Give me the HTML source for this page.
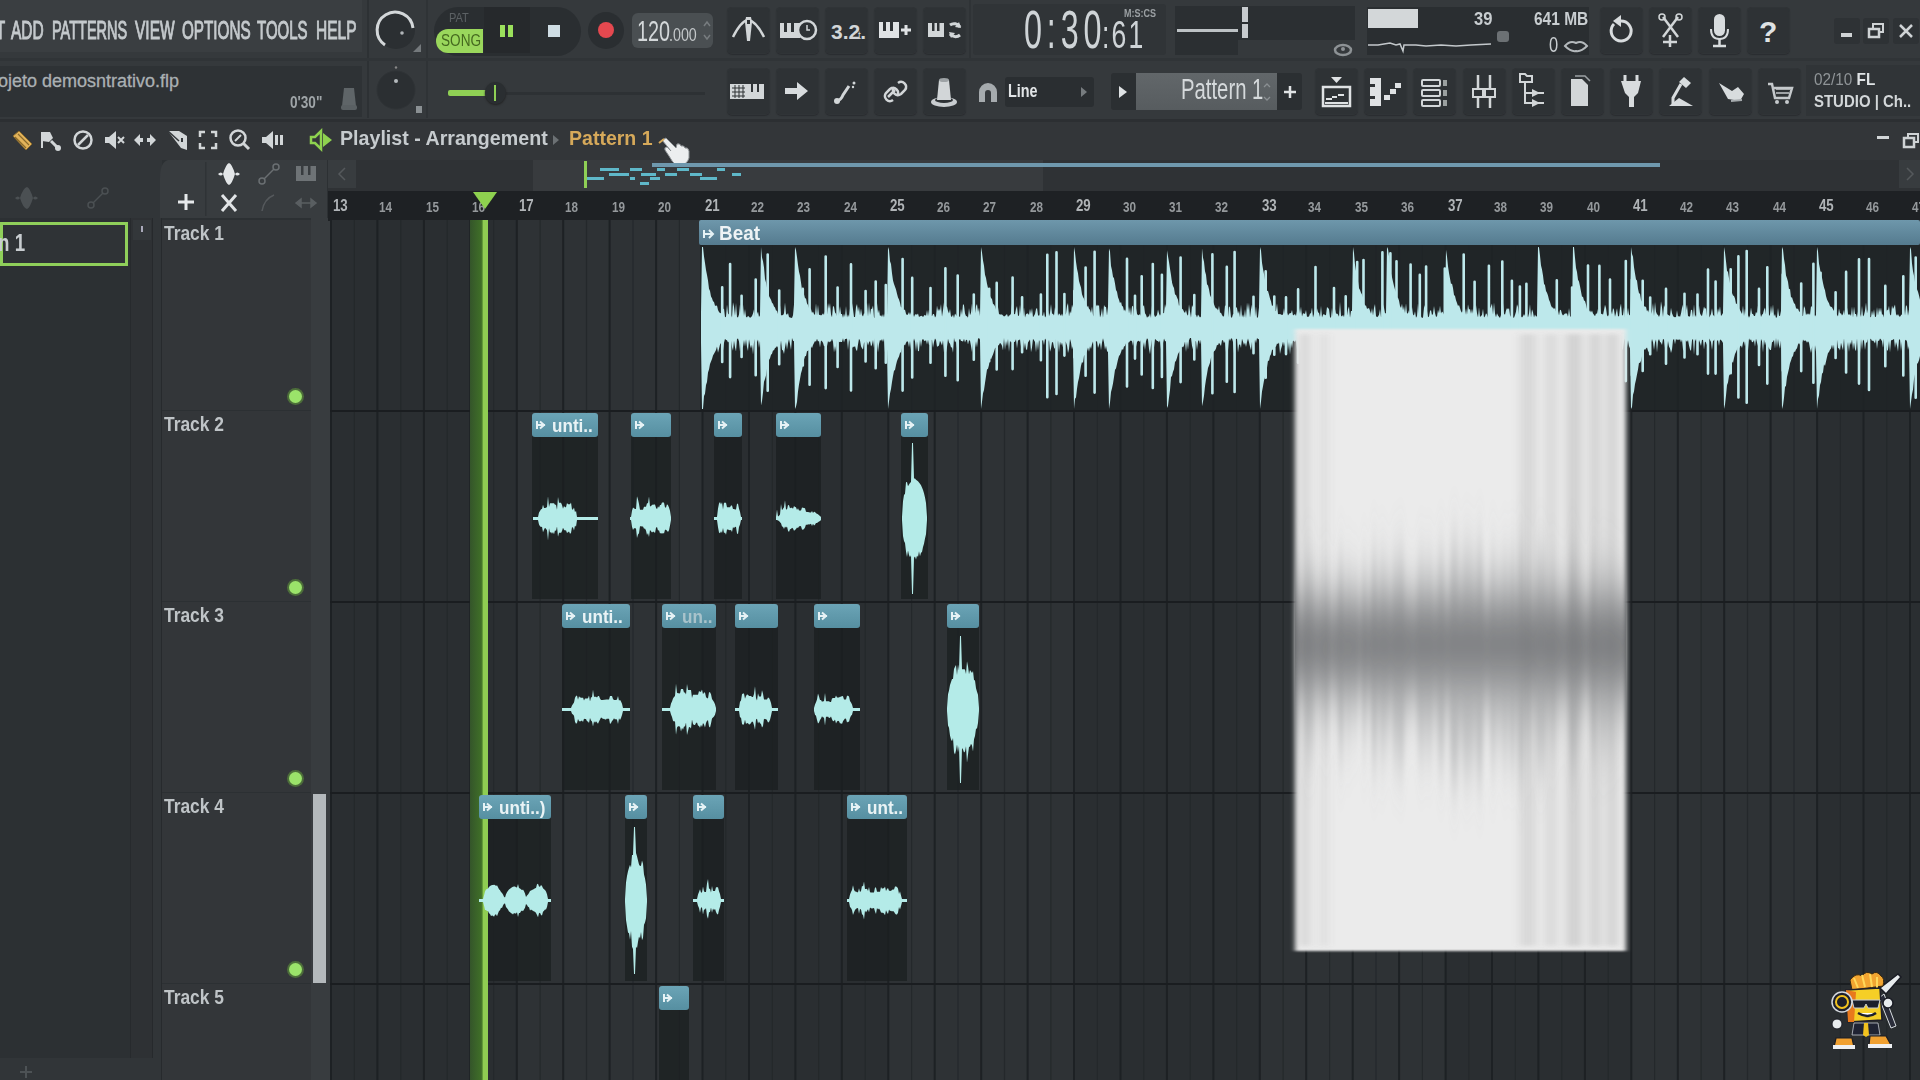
<!DOCTYPE html><html><head><meta charset="utf-8"><style>
*{margin:0;padding:0;box-sizing:border-box}
html,body{width:1920px;height:1080px;overflow:hidden;background:#2c3033;font-family:"Liberation Sans",sans-serif;color:#c8cdd0}
.a{position:absolute}
.t{position:absolute;white-space:nowrap;line-height:1}
.btn{position:absolute;background:#2c3033;border-radius:4px;box-shadow:inset 0 0 0 1px #26292c}
</style></head><body>

<div class="a" style="left:0;top:0;width:1920px;height:120px;background:#35393c"></div>
<div class="a" style="left:0;top:0;width:362px;height:52px;background:#3a3e41"></div>
<div class="a" style="left:0;top:66px;width:362px;height:51px;background:#2e3235"></div>
<div class="a" style="left:0;top:119px;width:1920px;height:41px;background:#333639;border-top:3px solid #2c2f32"></div>
<div class="a" style="left:0;top:160px;width:162px;height:920px;background:#313538"></div>
<div class="a" style="left:0;top:218px;width:130px;height:840px;background:#2c3033"></div>
<div class="a" style="left:130px;top:218px;width:23px;height:840px;background:#2e3134;border-left:1px solid #272a2d;border-right:1px solid #26292c"></div>
<div class="a" style="left:161px;top:218px;width:1px;height:862px;background:#272a2d"></div>
<div class="a" style="left:0;top:222px;width:128px;height:44px;border:3px solid #8fcf5a;background:#2f3336"></div>
<div class="t" style="left:-2px;top:231px;font-size:24px;font-weight:bold;color:#c8cdd0;transform:scaleX(.78);transform-origin:0 0">n 1</div>
<div class="a" style="left:162px;top:220px;width:149px;height:190px;background:#333639"></div>
<div class="t" style="left:164px;top:223px;font-size:20px;font-weight:bold;color:#bfc4c7;transform:scaleX(.87);transform-origin:0 0">Track 1</div>
<div class="a" style="left:289px;top:390px;width:13px;height:13px;border-radius:50%;background:#9be36a;box-shadow:0 0 0 2px #4d6e3a"></div>
<div class="a" style="left:162px;top:411px;width:149px;height:190px;background:#333639"></div>
<div class="t" style="left:164px;top:414px;font-size:20px;font-weight:bold;color:#bfc4c7;transform:scaleX(.87);transform-origin:0 0">Track 2</div>
<div class="a" style="left:289px;top:581px;width:13px;height:13px;border-radius:50%;background:#9be36a;box-shadow:0 0 0 2px #4d6e3a"></div>
<div class="a" style="left:162px;top:602px;width:149px;height:190px;background:#333639"></div>
<div class="t" style="left:164px;top:605px;font-size:20px;font-weight:bold;color:#bfc4c7;transform:scaleX(.87);transform-origin:0 0">Track 3</div>
<div class="a" style="left:289px;top:772px;width:13px;height:13px;border-radius:50%;background:#9be36a;box-shadow:0 0 0 2px #4d6e3a"></div>
<div class="a" style="left:162px;top:793px;width:149px;height:190px;background:#333639"></div>
<div class="t" style="left:164px;top:796px;font-size:20px;font-weight:bold;color:#bfc4c7;transform:scaleX(.87);transform-origin:0 0">Track 4</div>
<div class="a" style="left:289px;top:963px;width:13px;height:13px;border-radius:50%;background:#9be36a;box-shadow:0 0 0 2px #4d6e3a"></div>
<div class="a" style="left:162px;top:984px;width:149px;height:190px;background:#333639"></div>
<div class="t" style="left:164px;top:987px;font-size:20px;font-weight:bold;color:#bfc4c7;transform:scaleX(.87);transform-origin:0 0">Track 5</div>
<div class="a" style="left:311px;top:218px;width:19px;height:862px;background:#383c3f"></div>
<div class="a" style="left:313px;top:794px;width:13px;height:189px;background:#b4b9bc"></div>
<div class="a" style="left:328px;top:191px;width:1592px;height:30px;background:#1e2124"></div>
<div class="a" style="left:328px;top:160px;width:1592px;height:31px;background:#2f3235"></div>
<div class="a" style="left:533px;top:160px;width:510px;height:31px;background:#383b3e"></div>
<svg class="a" style="left:330px;top:220px" width="1590" height="860" viewBox="330 220 1590 860"><rect x="330" y="220" width="1590" height="860" fill="#2a2e31"/><rect x="516.8" y="220" width="185.8" height="860" fill="#2e3235"/><rect x="888.3" y="220" width="185.8" height="860" fill="#2e3235"/><rect x="1259.8" y="220" width="185.8" height="860" fill="#2e3235"/><rect x="1631.3" y="220" width="185.8" height="860" fill="#2e3235"/><rect x="2002.8" y="220" width="185.8" height="860" fill="#2e3235"/><rect x="330.0" y="220" width="2" height="860" fill="#1d2124"/><rect x="353.7" y="220" width="1.2" height="860" fill="#24282b"/><rect x="376.4" y="220" width="2" height="860" fill="#1d2124"/><rect x="400.2" y="220" width="1.2" height="860" fill="#24282b"/><rect x="422.9" y="220" width="2" height="860" fill="#1d2124"/><rect x="446.6" y="220" width="1.2" height="860" fill="#24282b"/><rect x="469.3" y="220" width="2" height="860" fill="#1d2124"/><rect x="493.0" y="220" width="1.2" height="860" fill="#24282b"/><rect x="515.8" y="220" width="2" height="860" fill="#1d2124"/><rect x="539.5" y="220" width="1.2" height="860" fill="#24282b"/><rect x="562.2" y="220" width="2" height="860" fill="#1d2124"/><rect x="585.9" y="220" width="1.2" height="860" fill="#24282b"/><rect x="608.6" y="220" width="2" height="860" fill="#1d2124"/><rect x="632.4" y="220" width="1.2" height="860" fill="#24282b"/><rect x="655.1" y="220" width="2" height="860" fill="#1d2124"/><rect x="678.8" y="220" width="1.2" height="860" fill="#24282b"/><rect x="701.5" y="220" width="2" height="860" fill="#1d2124"/><rect x="725.2" y="220" width="1.2" height="860" fill="#24282b"/><rect x="748.0" y="220" width="2" height="860" fill="#1d2124"/><rect x="771.7" y="220" width="1.2" height="860" fill="#24282b"/><rect x="794.4" y="220" width="2" height="860" fill="#1d2124"/><rect x="818.1" y="220" width="1.2" height="860" fill="#24282b"/><rect x="840.8" y="220" width="2" height="860" fill="#1d2124"/><rect x="864.6" y="220" width="1.2" height="860" fill="#24282b"/><rect x="887.3" y="220" width="2" height="860" fill="#1d2124"/><rect x="911.0" y="220" width="1.2" height="860" fill="#24282b"/><rect x="933.7" y="220" width="2" height="860" fill="#1d2124"/><rect x="957.4" y="220" width="1.2" height="860" fill="#24282b"/><rect x="980.2" y="220" width="2" height="860" fill="#1d2124"/><rect x="1003.9" y="220" width="1.2" height="860" fill="#24282b"/><rect x="1026.6" y="220" width="2" height="860" fill="#1d2124"/><rect x="1050.3" y="220" width="1.2" height="860" fill="#24282b"/><rect x="1073.0" y="220" width="2" height="860" fill="#1d2124"/><rect x="1096.8" y="220" width="1.2" height="860" fill="#24282b"/><rect x="1119.5" y="220" width="2" height="860" fill="#1d2124"/><rect x="1143.2" y="220" width="1.2" height="860" fill="#24282b"/><rect x="1165.9" y="220" width="2" height="860" fill="#1d2124"/><rect x="1189.6" y="220" width="1.2" height="860" fill="#24282b"/><rect x="1212.4" y="220" width="2" height="860" fill="#1d2124"/><rect x="1236.1" y="220" width="1.2" height="860" fill="#24282b"/><rect x="1258.8" y="220" width="2" height="860" fill="#1d2124"/><rect x="1282.5" y="220" width="1.2" height="860" fill="#24282b"/><rect x="1305.2" y="220" width="2" height="860" fill="#1d2124"/><rect x="1329.0" y="220" width="1.2" height="860" fill="#24282b"/><rect x="1351.7" y="220" width="2" height="860" fill="#1d2124"/><rect x="1375.4" y="220" width="1.2" height="860" fill="#24282b"/><rect x="1398.1" y="220" width="2" height="860" fill="#1d2124"/><rect x="1421.8" y="220" width="1.2" height="860" fill="#24282b"/><rect x="1444.6" y="220" width="2" height="860" fill="#1d2124"/><rect x="1468.3" y="220" width="1.2" height="860" fill="#24282b"/><rect x="1491.0" y="220" width="2" height="860" fill="#1d2124"/><rect x="1514.7" y="220" width="1.2" height="860" fill="#24282b"/><rect x="1537.4" y="220" width="2" height="860" fill="#1d2124"/><rect x="1561.2" y="220" width="1.2" height="860" fill="#24282b"/><rect x="1583.9" y="220" width="2" height="860" fill="#1d2124"/><rect x="1607.6" y="220" width="1.2" height="860" fill="#24282b"/><rect x="1630.3" y="220" width="2" height="860" fill="#1d2124"/><rect x="1654.0" y="220" width="1.2" height="860" fill="#24282b"/><rect x="1676.8" y="220" width="2" height="860" fill="#1d2124"/><rect x="1700.5" y="220" width="1.2" height="860" fill="#24282b"/><rect x="1723.2" y="220" width="2" height="860" fill="#1d2124"/><rect x="1746.9" y="220" width="1.2" height="860" fill="#24282b"/><rect x="1769.6" y="220" width="2" height="860" fill="#1d2124"/><rect x="1793.4" y="220" width="1.2" height="860" fill="#24282b"/><rect x="1816.1" y="220" width="2" height="860" fill="#1d2124"/><rect x="1839.8" y="220" width="1.2" height="860" fill="#24282b"/><rect x="1862.5" y="220" width="2" height="860" fill="#1d2124"/><rect x="1886.2" y="220" width="1.2" height="860" fill="#24282b"/><rect x="1909.0" y="220" width="2" height="860" fill="#1d2124"/><rect x="1932.7" y="220" width="1.2" height="860" fill="#24282b"/><rect x="330" y="410" width="1590" height="2" fill="#1a1d20"/><rect x="330" y="601" width="1590" height="2" fill="#1a1d20"/><rect x="330" y="792" width="1590" height="2" fill="#1a1d20"/><rect x="330" y="983" width="1590" height="2" fill="#1a1d20"/></svg>
<div class="t" style="left:333.0px;top:197px;font-size:17px;font-weight:bold;color:#b0b4b7;transform:scaleX(.78);transform-origin:0 0">13</div>
<div class="t" style="left:379.4px;top:199px;font-size:15px;font-weight:bold;color:#95999c;transform:scaleX(.78);transform-origin:0 0">14</div>
<div class="t" style="left:425.9px;top:199px;font-size:15px;font-weight:bold;color:#95999c;transform:scaleX(.78);transform-origin:0 0">15</div>
<div class="t" style="left:472.3px;top:199px;font-size:15px;font-weight:bold;color:#95999c;transform:scaleX(.78);transform-origin:0 0">16</div>
<div class="t" style="left:518.8px;top:197px;font-size:17px;font-weight:bold;color:#b0b4b7;transform:scaleX(.78);transform-origin:0 0">17</div>
<div class="t" style="left:565.2px;top:199px;font-size:15px;font-weight:bold;color:#95999c;transform:scaleX(.78);transform-origin:0 0">18</div>
<div class="t" style="left:611.6px;top:199px;font-size:15px;font-weight:bold;color:#95999c;transform:scaleX(.78);transform-origin:0 0">19</div>
<div class="t" style="left:658.1px;top:199px;font-size:15px;font-weight:bold;color:#95999c;transform:scaleX(.78);transform-origin:0 0">20</div>
<div class="t" style="left:704.5px;top:197px;font-size:17px;font-weight:bold;color:#b0b4b7;transform:scaleX(.78);transform-origin:0 0">21</div>
<div class="t" style="left:751.0px;top:199px;font-size:15px;font-weight:bold;color:#95999c;transform:scaleX(.78);transform-origin:0 0">22</div>
<div class="t" style="left:797.4px;top:199px;font-size:15px;font-weight:bold;color:#95999c;transform:scaleX(.78);transform-origin:0 0">23</div>
<div class="t" style="left:843.8px;top:199px;font-size:15px;font-weight:bold;color:#95999c;transform:scaleX(.78);transform-origin:0 0">24</div>
<div class="t" style="left:890.3px;top:197px;font-size:17px;font-weight:bold;color:#b0b4b7;transform:scaleX(.78);transform-origin:0 0">25</div>
<div class="t" style="left:936.7px;top:199px;font-size:15px;font-weight:bold;color:#95999c;transform:scaleX(.78);transform-origin:0 0">26</div>
<div class="t" style="left:983.2px;top:199px;font-size:15px;font-weight:bold;color:#95999c;transform:scaleX(.78);transform-origin:0 0">27</div>
<div class="t" style="left:1029.6px;top:199px;font-size:15px;font-weight:bold;color:#95999c;transform:scaleX(.78);transform-origin:0 0">28</div>
<div class="t" style="left:1076.0px;top:197px;font-size:17px;font-weight:bold;color:#b0b4b7;transform:scaleX(.78);transform-origin:0 0">29</div>
<div class="t" style="left:1122.5px;top:199px;font-size:15px;font-weight:bold;color:#95999c;transform:scaleX(.78);transform-origin:0 0">30</div>
<div class="t" style="left:1168.9px;top:199px;font-size:15px;font-weight:bold;color:#95999c;transform:scaleX(.78);transform-origin:0 0">31</div>
<div class="t" style="left:1215.4px;top:199px;font-size:15px;font-weight:bold;color:#95999c;transform:scaleX(.78);transform-origin:0 0">32</div>
<div class="t" style="left:1261.8px;top:197px;font-size:17px;font-weight:bold;color:#b0b4b7;transform:scaleX(.78);transform-origin:0 0">33</div>
<div class="t" style="left:1308.2px;top:199px;font-size:15px;font-weight:bold;color:#95999c;transform:scaleX(.78);transform-origin:0 0">34</div>
<div class="t" style="left:1354.7px;top:199px;font-size:15px;font-weight:bold;color:#95999c;transform:scaleX(.78);transform-origin:0 0">35</div>
<div class="t" style="left:1401.1px;top:199px;font-size:15px;font-weight:bold;color:#95999c;transform:scaleX(.78);transform-origin:0 0">36</div>
<div class="t" style="left:1447.6px;top:197px;font-size:17px;font-weight:bold;color:#b0b4b7;transform:scaleX(.78);transform-origin:0 0">37</div>
<div class="t" style="left:1494.0px;top:199px;font-size:15px;font-weight:bold;color:#95999c;transform:scaleX(.78);transform-origin:0 0">38</div>
<div class="t" style="left:1540.4px;top:199px;font-size:15px;font-weight:bold;color:#95999c;transform:scaleX(.78);transform-origin:0 0">39</div>
<div class="t" style="left:1586.9px;top:199px;font-size:15px;font-weight:bold;color:#95999c;transform:scaleX(.78);transform-origin:0 0">40</div>
<div class="t" style="left:1633.3px;top:197px;font-size:17px;font-weight:bold;color:#b0b4b7;transform:scaleX(.78);transform-origin:0 0">41</div>
<div class="t" style="left:1679.8px;top:199px;font-size:15px;font-weight:bold;color:#95999c;transform:scaleX(.78);transform-origin:0 0">42</div>
<div class="t" style="left:1726.2px;top:199px;font-size:15px;font-weight:bold;color:#95999c;transform:scaleX(.78);transform-origin:0 0">43</div>
<div class="t" style="left:1772.6px;top:199px;font-size:15px;font-weight:bold;color:#95999c;transform:scaleX(.78);transform-origin:0 0">44</div>
<div class="t" style="left:1819.1px;top:197px;font-size:17px;font-weight:bold;color:#b0b4b7;transform:scaleX(.78);transform-origin:0 0">45</div>
<div class="t" style="left:1865.5px;top:199px;font-size:15px;font-weight:bold;color:#95999c;transform:scaleX(.78);transform-origin:0 0">46</div>
<div class="t" style="left:1912.0px;top:199px;font-size:15px;font-weight:bold;color:#95999c;transform:scaleX(.78);transform-origin:0 0">47</div>
<svg class="a" style="left:0;top:0" width="1920" height="1080" viewBox="0 0 1920 1080"><defs><linearGradient id="hd" x1="0" y1="0" x2="0" y2="1"><stop offset="0" stop-color="#6e97ab"/><stop offset="1" stop-color="#557b8f"/></linearGradient><linearGradient id="hc" x1="0" y1="0" x2="0" y2="1"><stop offset="0" stop-color="#6ba4b6"/><stop offset="1" stop-color="#568fa1"/></linearGradient></defs><rect x="700" y="245" width="1220" height="165" fill="#1f2326" fill-opacity="0.82"/><rect x="699" y="220" width="1221" height="25" rx="2" fill="url(#hd)"/><path d="M701.0,313.4 L702.0,247.0 L703.0,247.0 L704.0,256.5 L705.0,263.1 L706.0,269.9 L707.0,275.0 L708.0,280.5 L709.0,288.7 L710.0,290.9 L711.0,296.6 L712.0,298.3 L713.0,301.3 L714.0,302.0 L715.0,305.7 L716.0,305.8 L717.0,305.5 L718.0,310.0 L719.0,312.0 L720.0,313.1 L721.0,313.3 L722.0,302.5 L723.0,309.3 L724.0,308.4 L725.0,317.2 L726.0,316.7 L727.0,304.6 L728.0,313.5 L729.0,314.5 L730.0,309.5 L731.0,315.2 L732.0,317.5 L733.0,302.2 L734.0,306.8 L735.0,315.8 L736.0,303.1 L737.0,317.1 L738.0,317.6 L739.0,314.6 L740.0,304.2 L741.0,313.7 L742.0,314.6 L743.0,304.6 L744.0,315.9 L745.0,309.0 L746.0,316.7 L747.0,317.4 L748.0,315.8 L749.0,316.8 L750.0,317.8 L751.0,317.3 L752.0,316.0 L753.0,313.4 L754.0,309.3 L755.0,317.3 L756.0,314.5 L757.0,313.9 L758.0,311.6 L759.0,317.0 L760.0,315.3 L761.0,247.0 L762.0,257.6 L763.0,261.2 L764.0,267.6 L765.0,279.1 L766.0,282.6 L767.0,287.8 L768.0,291.1 L769.0,296.1 L770.0,298.0 L771.0,299.7 L772.0,302.8 L773.0,303.7 L774.0,306.6 L775.0,307.4 L776.0,310.4 L777.0,310.7 L778.0,314.0 L779.0,314.0 L780.0,305.2 L781.0,315.5 L782.0,315.0 L783.0,315.2 L784.0,313.3 L785.0,302.5 L786.0,314.0 L787.0,314.8 L788.0,313.0 L789.0,317.0 L790.0,317.6 L791.0,317.7 L792.0,318.0 L793.0,315.2 L794.0,304.4 L795.0,247.0 L796.0,249.9 L797.0,257.1 L798.0,265.1 L799.0,271.8 L800.0,275.7 L801.0,282.6 L802.0,289.8 L803.0,290.5 L804.0,294.6 L805.0,298.3 L806.0,298.6 L807.0,303.5 L808.0,305.1 L809.0,308.0 L810.0,307.7 L811.0,308.9 L812.0,313.1 L813.0,311.4 L814.0,314.0 L815.0,315.1 L816.0,303.3 L817.0,315.6 L818.0,304.7 L819.0,314.9 L820.0,314.8 L821.0,315.4 L822.0,314.8 L823.0,313.3 L824.0,315.0 L825.0,311.5 L826.0,316.2 L827.0,314.7 L828.0,303.1 L829.0,308.8 L830.0,303.1 L831.0,314.6 L832.0,317.3 L833.0,306.0 L834.0,306.7 L835.0,312.5 L836.0,313.7 L837.0,316.3 L838.0,315.7 L839.0,313.7 L840.0,306.2 L841.0,314.1 L842.0,313.9 L843.0,317.8 L844.0,313.4 L845.0,316.9 L846.0,306.0 L847.0,317.5 L848.0,314.2 L849.0,317.1 L850.0,308.4 L851.0,318.0 L852.0,303.0 L853.0,309.2 L854.0,317.0 L855.0,316.9 L856.0,307.0 L857.0,303.9 L858.0,311.8 L859.0,306.5 L860.0,315.5 L861.0,308.4 L862.0,314.9 L863.0,316.4 L864.0,313.2 L865.0,313.8 L866.0,305.2 L867.0,302.7 L868.0,316.4 L869.0,302.5 L870.0,315.1 L871.0,308.8 L872.0,308.9 L873.0,305.6 L874.0,317.8 L875.0,317.7 L876.0,310.0 L877.0,302.9 L878.0,313.2 L879.0,309.6 L880.0,316.2 L881.0,315.1 L882.0,317.1 L883.0,313.9 L884.0,317.6 L885.0,313.3 L886.0,313.7 L887.0,316.4 L888.0,247.0 L889.0,250.1 L890.0,261.3 L891.0,264.1 L892.0,273.3 L893.0,280.5 L894.0,284.0 L895.0,286.8 L896.0,289.4 L897.0,293.8 L898.0,297.4 L899.0,299.4 L900.0,302.7 L901.0,307.5 L902.0,307.2 L903.0,310.1 L904.0,309.8 L905.0,309.7 L906.0,313.7 L907.0,315.3 L908.0,314.2 L909.0,312.0 L910.0,315.0 L911.0,311.9 L912.0,315.5 L913.0,314.7 L914.0,317.0 L915.0,314.6 L916.0,314.2 L917.0,314.7 L918.0,313.4 L919.0,317.0 L920.0,316.3 L921.0,316.1 L922.0,315.8 L923.0,317.2 L924.0,315.4 L925.0,314.7 L926.0,316.0 L927.0,310.0 L928.0,316.2 L929.0,309.4 L930.0,315.5 L931.0,315.8 L932.0,316.2 L933.0,313.9 L934.0,314.0 L935.0,317.6 L936.0,315.9 L937.0,305.4 L938.0,311.2 L939.0,308.6 L940.0,310.9 L941.0,303.9 L942.0,316.8 L943.0,309.9 L944.0,302.2 L945.0,316.4 L946.0,306.5 L947.0,306.4 L948.0,310.9 L949.0,313.5 L950.0,309.1 L951.0,316.6 L952.0,316.8 L953.0,314.4 L954.0,317.9 L955.0,313.6 L956.0,314.9 L957.0,316.1 L958.0,306.6 L959.0,316.1 L960.0,317.2 L961.0,308.8 L962.0,315.0 L963.0,304.0 L964.0,305.3 L965.0,313.5 L966.0,316.0 L967.0,316.2 L968.0,317.8 L969.0,308.1 L970.0,315.3 L971.0,312.8 L972.0,303.3 L973.0,313.8 L974.0,310.2 L975.0,313.2 L976.0,306.1 L977.0,304.0 L978.0,312.1 L979.0,307.4 L980.0,316.3 L981.0,247.0 L982.0,252.6 L983.0,260.4 L984.0,265.8 L985.0,274.8 L986.0,278.0 L987.0,283.8 L988.0,288.0 L989.0,289.8 L990.0,296.0 L991.0,297.9 L992.0,299.1 L993.0,304.1 L994.0,304.4 L995.0,306.6 L996.0,309.5 L997.0,307.0 L998.0,307.1 L999.0,313.9 L1000.0,314.4 L1001.0,314.6 L1002.0,314.5 L1003.0,315.5 L1004.0,316.5 L1005.0,316.1 L1006.0,315.1 L1007.0,314.1 L1008.0,317.1 L1009.0,315.5 L1010.0,315.2 L1011.0,313.6 L1012.0,303.4 L1013.0,308.2 L1014.0,313.9 L1015.0,314.2 L1016.0,309.0 L1017.0,306.1 L1018.0,315.7 L1019.0,315.7 L1020.0,304.8 L1021.0,314.0 L1022.0,316.8 L1023.0,316.5 L1024.0,307.2 L1025.0,317.6 L1026.0,314.2 L1027.0,313.6 L1028.0,313.5 L1029.0,314.9 L1030.0,308.7 L1031.0,314.1 L1032.0,307.9 L1033.0,317.3 L1034.0,315.7 L1035.0,313.9 L1036.0,309.2 L1037.0,307.7 L1038.0,314.9 L1039.0,315.9 L1040.0,314.2 L1041.0,314.2 L1042.0,314.9 L1043.0,316.2 L1044.0,311.6 L1045.0,317.6 L1046.0,316.0 L1047.0,313.3 L1048.0,310.0 L1049.0,316.3 L1050.0,313.1 L1051.0,304.1 L1052.0,313.8 L1053.0,313.7 L1054.0,315.6 L1055.0,307.0 L1056.0,310.0 L1057.0,313.1 L1058.0,315.8 L1059.0,313.2 L1060.0,314.4 L1061.0,316.0 L1062.0,313.6 L1063.0,316.4 L1064.0,304.5 L1065.0,314.7 L1066.0,313.5 L1067.0,306.0 L1068.0,303.0 L1069.0,316.5 L1070.0,311.0 L1071.0,313.5 L1072.0,304.4 L1073.0,307.8 L1074.0,247.0 L1075.0,252.4 L1076.0,261.8 L1077.0,268.7 L1078.0,273.3 L1079.0,280.9 L1080.0,284.4 L1081.0,287.6 L1082.0,294.2 L1083.0,297.1 L1084.0,298.7 L1085.0,301.5 L1086.0,303.2 L1087.0,307.3 L1088.0,305.5 L1089.0,308.8 L1090.0,309.8 L1091.0,313.1 L1092.0,306.4 L1093.0,315.0 L1094.0,316.4 L1095.0,317.2 L1096.0,306.5 L1097.0,304.5 L1098.0,306.2 L1099.0,304.7 L1100.0,317.4 L1101.0,314.6 L1102.0,307.9 L1103.0,317.7 L1104.0,305.1 L1105.0,306.9 L1106.0,306.7 L1107.0,315.4 L1108.0,306.8 L1109.0,248.4 L1110.0,251.6 L1111.0,266.1 L1112.0,270.2 L1113.0,276.7 L1114.0,278.2 L1115.0,283.5 L1116.0,290.0 L1117.0,291.8 L1118.0,297.2 L1119.0,299.8 L1120.0,303.2 L1121.0,301.8 L1122.0,305.9 L1123.0,306.4 L1124.0,310.9 L1125.0,309.2 L1126.0,311.8 L1127.0,311.4 L1128.0,305.9 L1129.0,313.4 L1130.0,307.1 L1131.0,315.6 L1132.0,306.6 L1133.0,305.7 L1134.0,316.4 L1135.0,310.8 L1136.0,308.2 L1137.0,313.8 L1138.0,315.2 L1139.0,315.0 L1140.0,313.9 L1141.0,315.9 L1142.0,316.3 L1143.0,306.5 L1144.0,305.1 L1145.0,313.2 L1146.0,314.7 L1147.0,317.7 L1148.0,316.6 L1149.0,316.4 L1150.0,313.2 L1151.0,318.0 L1152.0,305.6 L1153.0,307.2 L1154.0,314.6 L1155.0,317.1 L1156.0,316.2 L1157.0,315.1 L1158.0,309.6 L1159.0,313.4 L1160.0,315.8 L1161.0,314.1 L1162.0,315.8 L1163.0,313.1 L1164.0,313.3 L1165.0,304.0 L1166.0,308.1 L1167.0,250.2 L1168.0,256.2 L1169.0,262.0 L1170.0,268.8 L1171.0,275.0 L1172.0,282.4 L1173.0,286.1 L1174.0,288.0 L1175.0,294.6 L1176.0,295.0 L1177.0,297.4 L1178.0,299.8 L1179.0,306.0 L1180.0,305.1 L1181.0,305.1 L1182.0,308.8 L1183.0,309.6 L1184.0,311.7 L1185.0,312.9 L1186.0,310.0 L1187.0,314.2 L1188.0,315.8 L1189.0,304.3 L1190.0,311.4 L1191.0,317.8 L1192.0,304.9 L1193.0,307.3 L1194.0,314.3 L1195.0,314.8 L1196.0,314.7 L1197.0,317.6 L1198.0,314.6 L1199.0,316.0 L1200.0,317.5 L1201.0,316.4 L1202.0,248.2 L1203.0,257.7 L1204.0,261.8 L1205.0,271.2 L1206.0,274.8 L1207.0,284.2 L1208.0,285.6 L1209.0,289.3 L1210.0,295.1 L1211.0,297.2 L1212.0,300.2 L1213.0,302.1 L1214.0,304.3 L1215.0,307.0 L1216.0,308.4 L1217.0,308.6 L1218.0,310.6 L1219.0,305.7 L1220.0,312.8 L1221.0,312.8 L1222.0,314.9 L1223.0,316.4 L1224.0,316.3 L1225.0,305.4 L1226.0,305.8 L1227.0,314.0 L1228.0,317.5 L1229.0,306.3 L1230.0,307.4 L1231.0,317.6 L1232.0,317.4 L1233.0,314.0 L1234.0,314.2 L1235.0,316.4 L1236.0,306.8 L1237.0,308.2 L1238.0,313.7 L1239.0,310.8 L1240.0,317.2 L1241.0,304.5 L1242.0,317.3 L1243.0,314.3 L1244.0,317.7 L1245.0,309.0 L1246.0,317.9 L1247.0,302.5 L1248.0,310.3 L1249.0,302.7 L1250.0,317.8 L1251.0,309.5 L1252.0,304.5 L1253.0,311.5 L1254.0,304.8 L1255.0,316.5 L1256.0,306.3 L1257.0,317.9 L1258.0,317.1 L1259.0,307.5 L1260.0,247.0 L1261.0,250.5 L1262.0,262.8 L1263.0,269.0 L1264.0,274.0 L1265.0,279.7 L1266.0,283.5 L1267.0,290.8 L1268.0,291.0 L1269.0,294.6 L1270.0,298.4 L1271.0,301.3 L1272.0,306.1 L1273.0,305.3 L1274.0,308.1 L1275.0,311.3 L1276.0,310.8 L1277.0,303.2 L1278.0,313.9 L1279.0,314.2 L1280.0,314.1 L1281.0,314.4 L1282.0,314.9 L1283.0,314.4 L1284.0,307.9 L1285.0,314.0 L1286.0,315.3 L1287.0,312.4 L1288.0,315.5 L1289.0,314.1 L1290.0,313.1 L1291.0,313.2 L1292.0,309.9 L1293.0,315.6 L1294.0,314.8 L1295.0,314.0 L1296.0,316.1 L1297.0,310.9 L1298.0,313.8 L1299.0,308.0 L1300.0,313.8 L1301.0,306.4 L1302.0,316.4 L1303.0,313.2 L1304.0,313.6 L1305.0,313.9 L1306.0,309.9 L1307.0,316.8 L1308.0,316.7 L1309.0,316.5 L1310.0,313.5 L1311.0,313.2 L1312.0,307.4 L1313.0,317.5 L1314.0,314.1 L1315.0,308.0 L1316.0,314.0 L1317.0,308.3 L1318.0,312.3 L1319.0,313.1 L1320.0,317.0 L1321.0,305.7 L1322.0,317.5 L1323.0,314.8 L1324.0,313.9 L1325.0,315.3 L1326.0,314.9 L1327.0,307.0 L1328.0,308.1 L1329.0,309.1 L1330.0,317.3 L1331.0,317.8 L1332.0,307.7 L1333.0,316.6 L1334.0,314.8 L1335.0,308.9 L1336.0,313.8 L1337.0,313.5 L1338.0,314.4 L1339.0,316.8 L1340.0,301.8 L1341.0,315.8 L1342.0,316.5 L1343.0,314.8 L1344.0,317.3 L1345.0,314.0 L1346.0,314.1 L1347.0,315.5 L1348.0,309.2 L1349.0,306.5 L1350.0,317.8 L1351.0,311.1 L1352.0,310.9 L1353.0,247.0 L1354.0,253.1 L1355.0,264.7 L1356.0,271.0 L1357.0,274.3 L1358.0,281.2 L1359.0,288.2 L1360.0,290.0 L1361.0,292.8 L1362.0,294.4 L1363.0,297.5 L1364.0,303.4 L1365.0,305.4 L1366.0,305.4 L1367.0,308.8 L1368.0,308.4 L1369.0,308.0 L1370.0,310.7 L1371.0,313.8 L1372.0,308.0 L1373.0,315.4 L1374.0,308.1 L1375.0,303.9 L1376.0,316.1 L1377.0,317.2 L1378.0,316.5 L1379.0,314.8 L1380.0,309.0 L1381.0,317.2 L1382.0,316.8 L1383.0,304.5 L1384.0,307.8 L1385.0,313.3 L1386.0,313.2 L1387.0,247.0 L1388.0,248.9 L1389.0,256.3 L1390.0,263.8 L1391.0,273.4 L1392.0,277.3 L1393.0,281.7 L1394.0,286.1 L1395.0,289.6 L1396.0,292.1 L1397.0,297.6 L1398.0,297.8 L1399.0,300.5 L1400.0,306.1 L1401.0,307.9 L1402.0,303.7 L1403.0,310.2 L1404.0,306.1 L1405.0,313.1 L1406.0,303.2 L1407.0,313.5 L1408.0,313.3 L1409.0,310.1 L1410.0,313.7 L1411.0,309.9 L1412.0,307.0 L1413.0,314.6 L1414.0,315.5 L1415.0,311.2 L1416.0,317.8 L1417.0,315.9 L1418.0,303.2 L1419.0,313.8 L1420.0,317.7 L1421.0,316.4 L1422.0,317.9 L1423.0,317.6 L1424.0,307.8 L1425.0,305.0 L1426.0,303.6 L1427.0,311.1 L1428.0,317.2 L1429.0,316.5 L1430.0,310.9 L1431.0,310.0 L1432.0,315.2 L1433.0,313.8 L1434.0,306.0 L1435.0,313.0 L1436.0,316.8 L1437.0,316.6 L1438.0,309.7 L1439.0,313.2 L1440.0,305.7 L1441.0,313.6 L1442.0,311.5 L1443.0,312.5 L1444.0,314.4 L1445.0,313.9 L1446.0,249.7 L1447.0,256.5 L1448.0,266.3 L1449.0,273.1 L1450.0,278.6 L1451.0,283.9 L1452.0,283.5 L1453.0,287.9 L1454.0,294.9 L1455.0,295.9 L1456.0,300.2 L1457.0,303.1 L1458.0,305.9 L1459.0,305.1 L1460.0,308.1 L1461.0,311.3 L1462.0,312.8 L1463.0,310.5 L1464.0,312.8 L1465.0,314.7 L1466.0,308.2 L1467.0,314.8 L1468.0,304.3 L1469.0,309.8 L1470.0,308.7 L1471.0,313.7 L1472.0,308.8 L1473.0,313.8 L1474.0,305.4 L1475.0,311.3 L1476.0,305.0 L1477.0,313.3 L1478.0,317.5 L1479.0,307.3 L1480.0,316.9 L1481.0,315.9 L1482.0,314.9 L1483.0,308.8 L1484.0,317.5 L1485.0,316.3 L1486.0,313.2 L1487.0,314.6 L1488.0,317.5 L1489.0,313.5 L1490.0,308.5 L1491.0,306.2 L1492.0,303.5 L1493.0,314.5 L1494.0,302.4 L1495.0,313.4 L1496.0,317.2 L1497.0,313.3 L1498.0,315.6 L1499.0,316.8 L1500.0,317.9 L1501.0,314.9 L1502.0,315.6 L1503.0,303.0 L1504.0,313.8 L1505.0,314.8 L1506.0,310.4 L1507.0,308.0 L1508.0,309.4 L1509.0,307.9 L1510.0,315.0 L1511.0,317.0 L1512.0,310.5 L1513.0,317.6 L1514.0,317.7 L1515.0,314.9 L1516.0,311.7 L1517.0,304.2 L1518.0,306.9 L1519.0,314.8 L1520.0,315.8 L1521.0,316.4 L1522.0,317.4 L1523.0,316.3 L1524.0,314.1 L1525.0,315.9 L1526.0,309.9 L1527.0,316.0 L1528.0,317.5 L1529.0,313.5 L1530.0,304.0 L1531.0,317.5 L1532.0,309.3 L1533.0,312.2 L1534.0,317.4 L1535.0,314.5 L1536.0,316.5 L1537.0,316.2 L1538.0,247.0 L1539.0,247.3 L1540.0,255.7 L1541.0,265.4 L1542.0,269.5 L1543.0,275.6 L1544.0,283.8 L1545.0,285.3 L1546.0,291.0 L1547.0,292.7 L1548.0,295.6 L1549.0,299.8 L1550.0,301.9 L1551.0,305.4 L1552.0,307.5 L1553.0,307.6 L1554.0,309.3 L1555.0,307.7 L1556.0,311.4 L1557.0,315.1 L1558.0,310.8 L1559.0,315.5 L1560.0,309.7 L1561.0,310.2 L1562.0,314.1 L1563.0,315.6 L1564.0,314.6 L1565.0,313.4 L1566.0,313.5 L1567.0,313.5 L1568.0,316.7 L1569.0,307.9 L1570.0,315.8 L1571.0,317.3 L1572.0,316.8 L1573.0,247.0 L1574.0,247.1 L1575.0,257.8 L1576.0,267.9 L1577.0,272.0 L1578.0,279.8 L1579.0,281.5 L1580.0,286.3 L1581.0,291.6 L1582.0,296.7 L1583.0,296.7 L1584.0,300.4 L1585.0,300.9 L1586.0,304.6 L1587.0,308.9 L1588.0,307.7 L1589.0,311.7 L1590.0,310.2 L1591.0,312.4 L1592.0,310.4 L1593.0,313.5 L1594.0,314.7 L1595.0,316.3 L1596.0,313.5 L1597.0,313.8 L1598.0,308.8 L1599.0,314.9 L1600.0,305.5 L1601.0,314.0 L1602.0,313.7 L1603.0,314.7 L1604.0,310.1 L1605.0,304.8 L1606.0,308.0 L1607.0,315.3 L1608.0,316.6 L1609.0,314.6 L1610.0,305.8 L1611.0,311.0 L1612.0,314.6 L1613.0,308.0 L1614.0,309.8 L1615.0,316.8 L1616.0,313.1 L1617.0,308.3 L1618.0,316.0 L1619.0,316.5 L1620.0,307.7 L1621.0,303.4 L1622.0,315.3 L1623.0,315.3 L1624.0,307.0 L1625.0,317.6 L1626.0,317.4 L1627.0,315.3 L1628.0,307.7 L1629.0,314.4 L1630.0,315.6 L1631.0,247.0 L1632.0,254.1 L1633.0,256.7 L1634.0,267.2 L1635.0,273.4 L1636.0,279.5 L1637.0,280.5 L1638.0,288.7 L1639.0,293.2 L1640.0,293.8 L1641.0,300.0 L1642.0,301.7 L1643.0,305.0 L1644.0,306.1 L1645.0,306.8 L1646.0,306.7 L1647.0,311.5 L1648.0,309.8 L1649.0,312.5 L1650.0,313.6 L1651.0,313.9 L1652.0,311.3 L1653.0,302.9 L1654.0,316.1 L1655.0,301.9 L1656.0,311.8 L1657.0,314.2 L1658.0,315.1 L1659.0,317.0 L1660.0,314.2 L1661.0,301.3 L1662.0,307.3 L1663.0,316.9 L1664.0,305.1 L1665.0,307.6 L1666.0,315.4 L1667.0,313.7 L1668.0,315.0 L1669.0,315.3 L1670.0,316.1 L1671.0,307.7 L1672.0,313.3 L1673.0,315.8 L1674.0,317.2 L1675.0,317.0 L1676.0,317.2 L1677.0,310.2 L1678.0,316.7 L1679.0,315.7 L1680.0,316.9 L1681.0,313.4 L1682.0,308.0 L1683.0,304.6 L1684.0,316.5 L1685.0,315.8 L1686.0,310.3 L1687.0,304.5 L1688.0,316.1 L1689.0,316.6 L1690.0,316.5 L1691.0,309.9 L1692.0,309.7 L1693.0,317.2 L1694.0,304.3 L1695.0,317.1 L1696.0,314.7 L1697.0,317.8 L1698.0,313.4 L1699.0,305.4 L1700.0,313.2 L1701.0,315.3 L1702.0,315.9 L1703.0,311.6 L1704.0,306.4 L1705.0,308.9 L1706.0,307.7 L1707.0,316.1 L1708.0,317.5 L1709.0,317.5 L1710.0,315.9 L1711.0,314.0 L1712.0,308.3 L1713.0,315.1 L1714.0,315.8 L1715.0,316.8 L1716.0,305.9 L1717.0,314.9 L1718.0,308.2 L1719.0,312.7 L1720.0,306.3 L1721.0,316.1 L1722.0,314.7 L1723.0,313.1 L1724.0,247.0 L1725.0,252.4 L1726.0,261.2 L1727.0,270.8 L1728.0,272.1 L1729.0,278.3 L1730.0,283.2 L1731.0,289.5 L1732.0,293.0 L1733.0,295.6 L1734.0,296.0 L1735.0,298.6 L1736.0,303.9 L1737.0,303.5 L1738.0,307.9 L1739.0,308.2 L1740.0,309.9 L1741.0,312.1 L1742.0,314.1 L1743.0,305.5 L1744.0,316.1 L1745.0,308.4 L1746.0,314.6 L1747.0,305.3 L1748.0,315.2 L1749.0,317.8 L1750.0,315.4 L1751.0,307.5 L1752.0,313.8 L1753.0,314.0 L1754.0,315.9 L1755.0,315.9 L1756.0,311.8 L1757.0,313.5 L1758.0,305.2 L1759.0,310.5 L1760.0,313.1 L1761.0,317.1 L1762.0,314.8 L1763.0,313.8 L1764.0,309.8 L1765.0,307.6 L1766.0,314.4 L1767.0,318.0 L1768.0,304.5 L1769.0,315.9 L1770.0,314.6 L1771.0,305.4 L1772.0,313.8 L1773.0,304.2 L1774.0,316.3 L1775.0,314.1 L1776.0,317.9 L1777.0,317.1 L1778.0,308.0 L1779.0,315.7 L1780.0,316.0 L1781.0,310.8 L1782.0,247.0 L1783.0,249.4 L1784.0,259.0 L1785.0,264.9 L1786.0,275.5 L1787.0,278.3 L1788.0,281.8 L1789.0,289.3 L1790.0,288.7 L1791.0,297.5 L1792.0,297.2 L1793.0,300.6 L1794.0,303.2 L1795.0,304.1 L1796.0,308.0 L1797.0,308.9 L1798.0,308.4 L1799.0,311.2 L1800.0,312.0 L1801.0,313.6 L1802.0,315.7 L1803.0,315.9 L1804.0,306.1 L1805.0,308.2 L1806.0,315.3 L1807.0,313.3 L1808.0,314.7 L1809.0,313.3 L1810.0,315.0 L1811.0,306.2 L1812.0,306.7 L1813.0,308.8 L1814.0,314.8 L1815.0,316.6 L1816.0,314.7 L1817.0,247.0 L1818.0,251.3 L1819.0,263.7 L1820.0,268.7 L1821.0,275.9 L1822.0,277.7 L1823.0,282.9 L1824.0,287.4 L1825.0,290.3 L1826.0,295.9 L1827.0,299.5 L1828.0,301.5 L1829.0,303.3 L1830.0,306.2 L1831.0,306.7 L1832.0,307.2 L1833.0,309.2 L1834.0,311.0 L1835.0,304.3 L1836.0,314.0 L1837.0,314.8 L1838.0,316.5 L1839.0,308.6 L1840.0,313.6 L1841.0,313.3 L1842.0,315.4 L1843.0,313.9 L1844.0,309.8 L1845.0,315.6 L1846.0,316.1 L1847.0,307.5 L1848.0,313.9 L1849.0,315.1 L1850.0,314.1 L1851.0,315.9 L1852.0,306.6 L1853.0,317.6 L1854.0,306.5 L1855.0,314.0 L1856.0,314.1 L1857.0,317.4 L1858.0,311.6 L1859.0,315.1 L1860.0,313.9 L1861.0,317.0 L1862.0,305.8 L1863.0,316.4 L1864.0,315.1 L1865.0,310.7 L1866.0,302.6 L1867.0,313.6 L1868.0,309.4 L1869.0,314.7 L1870.0,317.3 L1871.0,316.9 L1872.0,310.4 L1873.0,315.6 L1874.0,309.2 L1875.0,317.0 L1876.0,316.7 L1877.0,307.1 L1878.0,315.6 L1879.0,307.6 L1880.0,312.3 L1881.0,307.4 L1882.0,314.7 L1883.0,314.3 L1884.0,317.4 L1885.0,305.2 L1886.0,311.8 L1887.0,309.4 L1888.0,310.6 L1889.0,305.8 L1890.0,314.6 L1891.0,315.6 L1892.0,305.5 L1893.0,308.9 L1894.0,306.9 L1895.0,304.6 L1896.0,314.0 L1897.0,315.7 L1898.0,313.9 L1899.0,316.2 L1900.0,316.7 L1901.0,315.2 L1902.0,314.3 L1903.0,313.3 L1904.0,309.5 L1905.0,315.5 L1906.0,305.1 L1907.0,306.5 L1908.0,315.8 L1909.0,309.4 L1910.0,247.0 L1911.0,249.6 L1912.0,263.4 L1913.0,271.3 L1914.0,275.7 L1915.0,282.0 L1916.0,286.6 L1917.0,289.2 L1918.0,291.8 L1919.0,295.5 L1920.0,299.7 L1920.0,355.9 L1919.0,360.2 L1918.0,362.7 L1917.0,364.0 L1916.0,369.7 L1915.0,374.2 L1914.0,378.9 L1913.0,389.5 L1912.0,394.2 L1911.0,401.8 L1910.0,409.0 L1909.0,345.9 L1908.0,349.9 L1907.0,341.5 L1906.0,339.7 L1905.0,340.5 L1904.0,350.3 L1903.0,342.7 L1902.0,341.7 L1901.0,350.9 L1900.0,339.3 L1899.0,339.8 L1898.0,351.8 L1897.0,345.5 L1896.0,342.0 L1895.0,347.9 L1894.0,338.7 L1893.0,339.8 L1892.0,340.0 L1891.0,340.4 L1890.0,352.6 L1889.0,341.1 L1888.0,349.7 L1887.0,351.1 L1886.0,344.6 L1885.0,341.4 L1884.0,338.6 L1883.0,347.7 L1882.0,341.3 L1881.0,339.4 L1880.0,338.5 L1879.0,341.0 L1878.0,340.4 L1877.0,349.0 L1876.0,339.3 L1875.0,343.4 L1874.0,341.7 L1873.0,340.4 L1872.0,341.0 L1871.0,339.1 L1870.0,338.7 L1869.0,341.3 L1868.0,339.0 L1867.0,342.4 L1866.0,342.5 L1865.0,350.1 L1864.0,340.9 L1863.0,339.6 L1862.0,349.9 L1861.0,339.0 L1860.0,353.3 L1859.0,340.9 L1858.0,351.7 L1857.0,338.6 L1856.0,351.2 L1855.0,349.2 L1854.0,342.4 L1853.0,349.9 L1852.0,339.5 L1851.0,345.0 L1850.0,341.9 L1849.0,352.0 L1848.0,342.1 L1847.0,347.1 L1846.0,339.9 L1845.0,351.4 L1844.0,338.2 L1843.0,350.2 L1842.0,346.7 L1841.0,342.7 L1840.0,350.5 L1839.0,348.2 L1838.0,348.3 L1837.0,339.7 L1836.0,349.6 L1835.0,351.0 L1834.0,344.5 L1833.0,349.4 L1832.0,344.8 L1831.0,348.6 L1830.0,349.8 L1829.0,351.9 L1828.0,353.0 L1827.0,357.0 L1826.0,361.6 L1825.0,366.0 L1824.0,364.2 L1823.0,372.5 L1822.0,373.8 L1821.0,381.9 L1820.0,385.0 L1819.0,395.4 L1818.0,398.9 L1817.0,408.9 L1816.0,351.8 L1815.0,345.2 L1814.0,350.7 L1813.0,345.4 L1812.0,347.3 L1811.0,352.9 L1810.0,348.6 L1809.0,342.7 L1808.0,341.3 L1807.0,342.7 L1806.0,340.7 L1805.0,340.4 L1804.0,341.1 L1803.0,339.6 L1802.0,342.5 L1801.0,343.1 L1800.0,344.7 L1799.0,342.9 L1798.0,344.4 L1797.0,348.3 L1796.0,349.5 L1795.0,352.1 L1794.0,351.5 L1793.0,356.0 L1792.0,357.2 L1791.0,360.6 L1790.0,363.3 L1789.0,368.4 L1788.0,372.7 L1787.0,376.7 L1786.0,385.8 L1785.0,386.9 L1784.0,397.8 L1783.0,405.5 L1782.0,409.0 L1781.0,340.6 L1780.0,348.7 L1779.0,344.9 L1778.0,338.9 L1777.0,348.0 L1776.0,338.1 L1775.0,348.8 L1774.0,339.7 L1773.0,341.8 L1772.0,342.2 L1771.0,350.1 L1770.0,350.1 L1769.0,348.3 L1768.0,346.6 L1767.0,338.0 L1766.0,341.6 L1765.0,345.5 L1764.0,339.6 L1763.0,352.5 L1762.0,341.2 L1761.0,338.9 L1760.0,348.9 L1759.0,341.3 L1758.0,346.0 L1757.0,342.5 L1756.0,338.4 L1755.0,346.8 L1754.0,340.1 L1753.0,342.0 L1752.0,342.2 L1751.0,339.3 L1750.0,340.6 L1749.0,338.2 L1748.0,350.7 L1747.0,342.7 L1746.0,341.4 L1745.0,346.3 L1744.0,341.2 L1743.0,342.7 L1742.0,347.9 L1741.0,345.5 L1740.0,346.4 L1739.0,348.7 L1738.0,346.9 L1737.0,349.5 L1736.0,352.1 L1735.0,354.0 L1734.0,357.9 L1733.0,363.0 L1732.0,361.5 L1731.0,367.5 L1730.0,374.3 L1729.0,375.7 L1728.0,382.5 L1727.0,384.9 L1726.0,395.4 L1725.0,404.5 L1724.0,409.0 L1723.0,342.9 L1722.0,341.3 L1721.0,339.9 L1720.0,339.4 L1719.0,346.0 L1718.0,340.0 L1717.0,341.1 L1716.0,342.6 L1715.0,339.2 L1714.0,340.2 L1713.0,340.9 L1712.0,350.0 L1711.0,342.0 L1710.0,340.1 L1709.0,338.5 L1708.0,338.5 L1707.0,344.9 L1706.0,342.5 L1705.0,341.4 L1704.0,349.6 L1703.0,339.8 L1702.0,340.1 L1701.0,346.0 L1700.0,342.8 L1699.0,339.9 L1698.0,342.6 L1697.0,338.2 L1696.0,341.3 L1695.0,338.9 L1694.0,354.7 L1693.0,338.8 L1692.0,340.3 L1691.0,351.0 L1690.0,349.5 L1689.0,345.6 L1688.0,339.9 L1687.0,342.1 L1686.0,340.6 L1685.0,340.2 L1684.0,350.8 L1683.0,349.4 L1682.0,339.6 L1681.0,342.6 L1680.0,339.1 L1679.0,340.3 L1678.0,339.3 L1677.0,340.2 L1676.0,338.8 L1675.0,344.2 L1674.0,338.8 L1673.0,340.2 L1672.0,349.4 L1671.0,353.0 L1670.0,348.5 L1669.0,346.6 L1668.0,341.0 L1667.0,347.8 L1666.0,340.6 L1665.0,348.0 L1664.0,339.4 L1663.0,339.1 L1662.0,344.9 L1661.0,342.7 L1660.0,341.8 L1659.0,339.0 L1658.0,340.9 L1657.0,352.6 L1656.0,339.4 L1655.0,342.4 L1654.0,350.0 L1653.0,342.3 L1652.0,339.0 L1651.0,342.1 L1650.0,342.7 L1649.0,352.6 L1648.0,350.8 L1647.0,347.4 L1646.0,348.6 L1645.0,350.0 L1644.0,349.1 L1643.0,353.0 L1642.0,356.2 L1641.0,360.7 L1640.0,363.1 L1639.0,362.8 L1638.0,369.4 L1637.0,374.6 L1636.0,379.8 L1635.0,384.0 L1634.0,391.4 L1633.0,394.8 L1632.0,406.9 L1631.0,409.0 L1630.0,348.4 L1629.0,345.9 L1628.0,340.2 L1627.0,347.4 L1626.0,338.6 L1625.0,338.4 L1624.0,341.7 L1623.0,348.8 L1622.0,350.1 L1621.0,340.8 L1620.0,347.1 L1619.0,339.5 L1618.0,340.0 L1617.0,340.4 L1616.0,353.2 L1615.0,339.2 L1614.0,338.4 L1613.0,340.8 L1612.0,341.4 L1611.0,338.4 L1610.0,342.9 L1609.0,351.7 L1608.0,343.9 L1607.0,347.1 L1606.0,349.1 L1605.0,340.4 L1604.0,341.1 L1603.0,341.3 L1602.0,342.3 L1601.0,346.2 L1600.0,338.9 L1599.0,349.4 L1598.0,341.1 L1597.0,349.4 L1596.0,349.1 L1595.0,340.7 L1594.0,342.1 L1593.0,342.5 L1592.0,343.0 L1591.0,345.9 L1590.0,343.2 L1589.0,344.2 L1588.0,346.0 L1587.0,348.6 L1586.0,349.9 L1585.0,351.9 L1584.0,354.1 L1583.0,355.1 L1582.0,359.1 L1581.0,364.8 L1580.0,366.8 L1579.0,372.5 L1578.0,378.0 L1577.0,386.2 L1576.0,388.7 L1575.0,394.5 L1574.0,404.6 L1573.0,409.0 L1572.0,347.5 L1571.0,346.9 L1570.0,340.2 L1569.0,341.6 L1568.0,339.3 L1567.0,353.6 L1566.0,350.7 L1565.0,342.6 L1564.0,347.9 L1563.0,340.4 L1562.0,351.7 L1561.0,348.9 L1560.0,341.1 L1559.0,340.5 L1558.0,342.6 L1557.0,343.8 L1556.0,345.2 L1555.0,343.7 L1554.0,348.7 L1553.0,348.4 L1552.0,349.8 L1551.0,350.8 L1550.0,351.9 L1549.0,354.6 L1548.0,359.8 L1547.0,362.4 L1546.0,366.7 L1545.0,371.0 L1544.0,375.0 L1543.0,377.9 L1542.0,386.3 L1541.0,388.2 L1540.0,401.8 L1539.0,408.4 L1538.0,409.0 L1537.0,339.8 L1536.0,350.7 L1535.0,350.4 L1534.0,338.6 L1533.0,338.3 L1532.0,342.5 L1531.0,338.5 L1530.0,350.7 L1529.0,342.5 L1528.0,338.5 L1527.0,340.0 L1526.0,351.3 L1525.0,340.1 L1524.0,341.9 L1523.0,350.5 L1522.0,338.6 L1521.0,348.8 L1520.0,351.5 L1519.0,341.2 L1518.0,340.1 L1517.0,340.9 L1516.0,344.0 L1515.0,351.6 L1514.0,338.3 L1513.0,338.4 L1512.0,347.4 L1511.0,339.0 L1510.0,345.3 L1509.0,339.5 L1508.0,338.1 L1507.0,343.9 L1506.0,338.5 L1505.0,341.2 L1504.0,342.2 L1503.0,342.0 L1502.0,345.2 L1501.0,341.1 L1500.0,338.1 L1499.0,349.3 L1498.0,349.7 L1497.0,342.7 L1496.0,338.8 L1495.0,348.0 L1494.0,349.1 L1493.0,341.5 L1492.0,342.8 L1491.0,346.2 L1490.0,341.8 L1489.0,342.5 L1488.0,338.5 L1487.0,341.4 L1486.0,342.8 L1485.0,347.7 L1484.0,338.5 L1483.0,345.6 L1482.0,341.1 L1481.0,351.9 L1480.0,339.1 L1479.0,339.2 L1478.0,338.5 L1477.0,342.7 L1476.0,349.8 L1475.0,338.5 L1474.0,339.4 L1473.0,342.2 L1472.0,338.8 L1471.0,350.0 L1470.0,348.6 L1469.0,338.7 L1468.0,340.2 L1467.0,339.0 L1466.0,341.7 L1465.0,341.3 L1464.0,343.4 L1463.0,344.2 L1462.0,349.6 L1461.0,346.3 L1460.0,348.3 L1459.0,348.7 L1458.0,352.1 L1457.0,353.1 L1456.0,353.7 L1455.0,357.4 L1454.0,362.9 L1453.0,365.7 L1452.0,367.2 L1451.0,377.1 L1450.0,379.9 L1449.0,385.6 L1448.0,389.1 L1447.0,397.3 L1446.0,408.8 L1445.0,342.1 L1444.0,352.2 L1443.0,338.3 L1442.0,346.2 L1441.0,342.4 L1440.0,347.8 L1439.0,348.9 L1438.0,341.7 L1437.0,339.4 L1436.0,339.2 L1435.0,350.6 L1434.0,350.0 L1433.0,342.2 L1432.0,340.8 L1431.0,347.3 L1430.0,339.9 L1429.0,346.1 L1428.0,338.8 L1427.0,350.6 L1426.0,349.3 L1425.0,341.0 L1424.0,338.8 L1423.0,338.4 L1422.0,347.6 L1421.0,348.0 L1420.0,338.3 L1419.0,342.2 L1418.0,341.9 L1417.0,340.1 L1416.0,338.2 L1415.0,338.1 L1414.0,340.5 L1413.0,353.2 L1412.0,339.6 L1411.0,340.4 L1410.0,342.3 L1409.0,340.8 L1408.0,342.7 L1407.0,341.7 L1406.0,350.1 L1405.0,342.9 L1404.0,342.9 L1403.0,348.7 L1402.0,347.2 L1401.0,348.1 L1400.0,351.0 L1399.0,355.7 L1398.0,355.1 L1397.0,359.8 L1396.0,360.3 L1395.0,365.9 L1394.0,370.4 L1393.0,373.2 L1392.0,376.7 L1391.0,384.2 L1390.0,393.2 L1389.0,397.8 L1388.0,409.0 L1387.0,409.0 L1386.0,342.8 L1385.0,352.7 L1384.0,338.4 L1383.0,339.6 L1382.0,339.2 L1381.0,338.8 L1380.0,348.6 L1379.0,348.1 L1378.0,339.5 L1377.0,338.4 L1376.0,339.9 L1375.0,340.2 L1374.0,349.0 L1373.0,350.4 L1372.0,341.2 L1371.0,341.8 L1370.0,350.5 L1369.0,344.4 L1368.0,350.9 L1367.0,349.5 L1366.0,349.2 L1365.0,352.4 L1364.0,354.7 L1363.0,356.3 L1362.0,360.8 L1361.0,359.6 L1360.0,363.6 L1359.0,369.3 L1358.0,375.3 L1357.0,380.3 L1356.0,385.9 L1355.0,394.7 L1354.0,402.3 L1353.0,408.8 L1352.0,340.6 L1351.0,338.4 L1350.0,338.2 L1349.0,342.8 L1348.0,343.4 L1347.0,347.8 L1346.0,341.9 L1345.0,342.0 L1344.0,338.7 L1343.0,341.2 L1342.0,349.3 L1341.0,340.2 L1340.0,352.8 L1339.0,339.2 L1338.0,341.6 L1337.0,342.5 L1336.0,342.2 L1335.0,341.7 L1334.0,341.2 L1333.0,339.4 L1332.0,341.5 L1331.0,342.7 L1330.0,343.5 L1329.0,339.3 L1328.0,339.8 L1327.0,340.5 L1326.0,349.0 L1325.0,352.2 L1324.0,342.1 L1323.0,341.2 L1322.0,338.5 L1321.0,351.5 L1320.0,350.3 L1319.0,349.1 L1318.0,347.4 L1317.0,339.9 L1316.0,349.0 L1315.0,351.4 L1314.0,341.9 L1313.0,342.6 L1312.0,341.3 L1311.0,346.3 L1310.0,347.7 L1309.0,339.5 L1308.0,350.7 L1307.0,344.1 L1306.0,340.8 L1305.0,342.1 L1304.0,342.4 L1303.0,352.0 L1302.0,345.2 L1301.0,348.4 L1300.0,352.1 L1299.0,339.1 L1298.0,349.0 L1297.0,349.5 L1296.0,339.9 L1295.0,342.0 L1294.0,341.2 L1293.0,340.4 L1292.0,348.2 L1291.0,342.8 L1290.0,354.5 L1289.0,341.9 L1288.0,351.0 L1287.0,338.4 L1286.0,340.7 L1285.0,342.0 L1284.0,346.4 L1283.0,341.6 L1282.0,345.8 L1281.0,348.9 L1280.0,353.9 L1279.0,342.4 L1278.0,344.1 L1277.0,343.5 L1276.0,346.4 L1275.0,346.9 L1274.0,347.3 L1273.0,349.4 L1272.0,349.9 L1271.0,354.2 L1270.0,356.1 L1269.0,360.9 L1268.0,360.4 L1267.0,367.8 L1266.0,368.6 L1265.0,376.9 L1264.0,380.6 L1263.0,386.2 L1262.0,391.6 L1261.0,401.5 L1260.0,409.0 L1259.0,339.2 L1258.0,338.9 L1257.0,338.1 L1256.0,343.2 L1255.0,339.5 L1254.0,342.1 L1253.0,350.4 L1252.0,341.7 L1251.0,350.2 L1250.0,346.7 L1249.0,342.3 L1248.0,338.6 L1247.0,342.1 L1246.0,346.9 L1245.0,342.5 L1244.0,345.0 L1243.0,341.7 L1242.0,338.7 L1241.0,348.0 L1240.0,344.2 L1239.0,345.1 L1238.0,352.4 L1237.0,338.8 L1236.0,338.9 L1235.0,339.6 L1234.0,353.7 L1233.0,342.0 L1232.0,338.6 L1231.0,338.4 L1230.0,341.1 L1229.0,338.6 L1228.0,350.2 L1227.0,342.0 L1226.0,352.2 L1225.0,341.3 L1224.0,343.3 L1223.0,340.3 L1222.0,340.2 L1221.0,346.0 L1220.0,344.2 L1219.0,342.7 L1218.0,345.2 L1217.0,344.7 L1216.0,348.4 L1215.0,350.6 L1214.0,351.2 L1213.0,352.4 L1212.0,356.1 L1211.0,357.7 L1210.0,362.8 L1209.0,365.5 L1208.0,367.9 L1207.0,374.0 L1206.0,379.6 L1205.0,386.3 L1204.0,395.8 L1203.0,401.8 L1202.0,406.2 L1201.0,339.6 L1200.0,344.2 L1199.0,340.0 L1198.0,341.4 L1197.0,350.0 L1196.0,341.3 L1195.0,341.2 L1194.0,341.7 L1193.0,349.4 L1192.0,345.7 L1191.0,338.0 L1190.0,338.1 L1189.0,340.2 L1188.0,349.7 L1187.0,341.4 L1186.0,352.0 L1185.0,341.5 L1184.0,345.5 L1183.0,347.4 L1182.0,346.4 L1181.0,347.2 L1180.0,351.1 L1179.0,352.3 L1178.0,354.0 L1177.0,357.8 L1176.0,360.7 L1175.0,362.0 L1174.0,369.2 L1173.0,371.7 L1172.0,375.9 L1171.0,377.1 L1170.0,389.9 L1169.0,397.4 L1168.0,405.8 L1167.0,407.9 L1166.0,341.4 L1165.0,340.9 L1164.0,338.6 L1163.0,342.9 L1162.0,340.2 L1161.0,349.6 L1160.0,340.2 L1159.0,342.6 L1158.0,341.0 L1157.0,340.9 L1156.0,339.8 L1155.0,338.9 L1154.0,347.5 L1153.0,349.1 L1152.0,339.4 L1151.0,345.3 L1150.0,354.2 L1149.0,349.0 L1148.0,339.4 L1147.0,338.3 L1146.0,341.3 L1145.0,350.1 L1144.0,342.0 L1143.0,347.8 L1142.0,339.7 L1141.0,340.1 L1140.0,342.1 L1139.0,341.0 L1138.0,340.8 L1137.0,342.2 L1136.0,346.7 L1135.0,338.8 L1134.0,339.6 L1133.0,345.9 L1132.0,341.2 L1131.0,340.4 L1130.0,341.1 L1129.0,342.6 L1128.0,342.4 L1127.0,346.9 L1126.0,343.2 L1125.0,346.1 L1124.0,346.4 L1123.0,350.0 L1122.0,349.0 L1121.0,352.2 L1120.0,354.8 L1119.0,356.1 L1118.0,359.6 L1117.0,364.1 L1116.0,368.6 L1115.0,369.7 L1114.0,377.1 L1113.0,383.5 L1112.0,388.2 L1111.0,392.1 L1110.0,402.5 L1109.0,409.0 L1108.0,352.2 L1107.0,351.1 L1106.0,345.7 L1105.0,349.7 L1104.0,342.4 L1103.0,338.3 L1102.0,342.8 L1101.0,350.2 L1100.0,342.4 L1099.0,345.0 L1098.0,347.9 L1097.0,341.2 L1096.0,341.4 L1095.0,340.7 L1094.0,345.4 L1093.0,341.4 L1092.0,344.3 L1091.0,348.9 L1090.0,346.3 L1089.0,351.7 L1088.0,347.6 L1087.0,351.1 L1086.0,353.1 L1085.0,354.9 L1084.0,355.8 L1083.0,363.0 L1082.0,362.1 L1081.0,365.7 L1080.0,372.2 L1079.0,378.0 L1078.0,381.9 L1077.0,388.8 L1076.0,397.6 L1075.0,398.8 L1074.0,409.0 L1073.0,346.2 L1072.0,349.4 L1071.0,342.5 L1070.0,338.9 L1069.0,349.1 L1068.0,352.9 L1067.0,345.4 L1066.0,342.5 L1065.0,341.3 L1064.0,351.2 L1063.0,347.6 L1062.0,342.4 L1061.0,345.5 L1060.0,341.6 L1059.0,352.4 L1058.0,340.2 L1057.0,342.9 L1056.0,338.3 L1055.0,348.9 L1054.0,347.4 L1053.0,342.3 L1052.0,342.2 L1051.0,348.6 L1050.0,351.7 L1049.0,339.7 L1048.0,342.0 L1047.0,342.7 L1046.0,340.0 L1045.0,338.4 L1044.0,345.2 L1043.0,339.8 L1042.0,341.1 L1041.0,341.8 L1040.0,341.8 L1039.0,340.1 L1038.0,350.7 L1037.0,341.6 L1036.0,352.2 L1035.0,342.1 L1034.0,340.3 L1033.0,338.7 L1032.0,347.6 L1031.0,352.3 L1030.0,339.4 L1029.0,341.1 L1028.0,342.5 L1027.0,350.3 L1026.0,349.0 L1025.0,342.7 L1024.0,349.1 L1023.0,339.5 L1022.0,339.2 L1021.0,346.8 L1020.0,339.3 L1019.0,340.3 L1018.0,340.3 L1017.0,348.4 L1016.0,339.2 L1015.0,341.8 L1014.0,342.1 L1013.0,343.7 L1012.0,342.0 L1011.0,342.4 L1010.0,340.8 L1009.0,351.9 L1008.0,338.9 L1007.0,346.2 L1006.0,340.9 L1005.0,350.1 L1004.0,338.1 L1003.0,350.6 L1002.0,345.8 L1001.0,343.7 L1000.0,342.9 L999.0,344.7 L998.0,345.8 L997.0,352.1 L996.0,347.6 L995.0,348.3 L994.0,351.4 L993.0,354.4 L992.0,356.8 L991.0,359.4 L990.0,358.3 L989.0,365.0 L988.0,368.7 L987.0,369.4 L986.0,376.2 L985.0,383.1 L984.0,390.1 L983.0,393.3 L982.0,401.7 L981.0,409.0 L980.0,339.7 L979.0,338.1 L978.0,338.8 L977.0,347.6 L976.0,341.3 L975.0,347.9 L974.0,338.3 L973.0,342.2 L972.0,352.2 L971.0,345.9 L970.0,340.7 L969.0,340.3 L968.0,344.4 L967.0,339.8 L966.0,340.0 L965.0,342.5 L964.0,338.8 L963.0,341.8 L962.0,341.0 L961.0,341.0 L960.0,338.8 L959.0,339.9 L958.0,338.3 L957.0,348.4 L956.0,341.1 L955.0,342.4 L954.0,338.1 L953.0,352.7 L952.0,347.2 L951.0,347.4 L950.0,343.8 L949.0,342.5 L948.0,338.7 L947.0,346.9 L946.0,352.6 L945.0,339.6 L944.0,352.7 L943.0,340.3 L942.0,345.4 L941.0,342.9 L940.0,340.7 L939.0,345.6 L938.0,346.2 L937.0,346.7 L936.0,340.1 L935.0,338.4 L934.0,342.0 L933.0,347.7 L932.0,339.8 L931.0,340.2 L930.0,344.6 L929.0,345.1 L928.0,339.8 L927.0,344.6 L926.0,340.0 L925.0,341.3 L924.0,340.6 L923.0,338.8 L922.0,340.2 L921.0,346.9 L920.0,339.7 L919.0,351.0 L918.0,351.3 L917.0,341.3 L916.0,351.2 L915.0,341.4 L914.0,338.5 L913.0,341.3 L912.0,340.5 L911.0,350.0 L910.0,341.0 L909.0,347.2 L908.0,341.8 L907.0,341.3 L906.0,342.7 L905.0,345.4 L904.0,344.6 L903.0,348.4 L902.0,347.9 L901.0,352.1 L900.0,353.1 L899.0,356.4 L898.0,358.5 L897.0,360.9 L896.0,364.9 L895.0,369.9 L894.0,370.8 L893.0,376.1 L892.0,381.9 L891.0,389.0 L890.0,393.5 L889.0,401.4 L888.0,409.0 L887.0,348.2 L886.0,342.3 L885.0,352.8 L884.0,338.4 L883.0,342.1 L882.0,338.9 L881.0,340.9 L880.0,339.8 L879.0,343.9 L878.0,352.6 L877.0,341.9 L876.0,339.3 L875.0,338.3 L874.0,348.0 L873.0,339.9 L872.0,344.7 L871.0,346.5 L870.0,340.9 L869.0,342.5 L868.0,345.5 L867.0,341.5 L866.0,340.4 L865.0,342.2 L864.0,342.8 L863.0,349.6 L862.0,348.3 L861.0,346.3 L860.0,340.5 L859.0,338.7 L858.0,344.6 L857.0,351.3 L856.0,349.6 L855.0,346.0 L854.0,347.3 L853.0,346.6 L852.0,348.2 L851.0,338.0 L850.0,342.0 L849.0,338.9 L848.0,350.0 L847.0,338.5 L846.0,339.0 L845.0,339.1 L844.0,342.6 L843.0,338.2 L842.0,342.1 L841.0,341.9 L840.0,341.7 L839.0,342.3 L838.0,340.3 L837.0,339.7 L836.0,351.7 L835.0,346.1 L834.0,352.6 L833.0,341.7 L832.0,338.7 L831.0,341.4 L830.0,341.5 L829.0,342.4 L828.0,341.0 L827.0,346.3 L826.0,339.8 L825.0,345.9 L824.0,346.2 L823.0,342.7 L822.0,341.2 L821.0,340.6 L820.0,347.6 L819.0,341.1 L818.0,341.5 L817.0,338.8 L816.0,341.7 L815.0,341.0 L814.0,343.1 L813.0,345.1 L812.0,348.2 L811.0,346.3 L810.0,350.4 L809.0,350.0 L808.0,350.8 L807.0,351.2 L806.0,356.0 L805.0,356.2 L804.0,359.6 L803.0,364.6 L802.0,369.9 L801.0,373.2 L800.0,378.9 L799.0,384.5 L798.0,391.6 L797.0,401.9 L796.0,406.6 L795.0,409.0 L794.0,341.2 L793.0,340.8 L792.0,338.0 L791.0,350.1 L790.0,344.1 L789.0,339.0 L788.0,343.0 L787.0,349.7 L786.0,342.0 L785.0,347.5 L784.0,354.1 L783.0,350.4 L782.0,349.8 L781.0,340.6 L780.0,345.3 L779.0,342.0 L778.0,347.7 L777.0,345.9 L776.0,347.4 L775.0,348.0 L774.0,350.2 L773.0,350.4 L772.0,353.8 L771.0,354.7 L770.0,358.3 L769.0,359.9 L768.0,364.0 L767.0,368.7 L766.0,375.5 L765.0,379.1 L764.0,381.8 L763.0,392.6 L762.0,401.1 L761.0,405.4 L760.0,340.7 L759.0,348.0 L758.0,339.6 L757.0,342.1 L756.0,341.5 L755.0,338.7 L754.0,342.6 L753.0,354.4 L752.0,344.6 L751.0,348.6 L750.0,345.1 L749.0,339.2 L748.0,351.0 L747.0,347.1 L746.0,339.3 L745.0,346.5 L744.0,340.1 L743.0,346.8 L742.0,347.9 L741.0,342.3 L740.0,351.6 L739.0,341.4 L738.0,338.4 L737.0,338.9 L736.0,351.4 L735.0,347.3 L734.0,340.7 L733.0,350.7 L732.0,347.0 L731.0,340.8 L730.0,339.2 L729.0,341.5 L728.0,342.5 L727.0,340.2 L726.0,340.1 L725.0,338.8 L724.0,342.8 L723.0,350.4 L722.0,341.7 L721.0,342.9 L720.0,344.4 L719.0,348.8 L718.0,352.8 L717.0,346.6 L716.0,349.9 L715.0,351.9 L714.0,353.8 L713.0,355.4 L712.0,359.1 L711.0,361.5 L710.0,364.1 L709.0,369.5 L708.0,372.4 L707.0,381.9 L706.0,384.9 L705.0,393.8 L704.0,396.1 L703.0,409.0 L702.0,409.0 L701.0,342.6Z" fill="#bde8eb"/><path d="M722.2,287.2V361.9M730.1,264.1V377.1M741.6,295.7V356.9M755.7,279.5V375.3M767.7,254.5V390.7M779.2,290.5V364.3M796.3,287.4V362.3M802.8,288.9V365.5M809.6,269.4V384.7M825.7,256.5V388.1M837.6,287.6V366.9M851.0,264.4V390.4M865.6,291.0V361.5M875.7,281.5V368.2M885.8,285.0V362.8M902.6,259.0V390.6M912.2,277.9V377.5M930.5,288.0V362.8M945.4,268.2V375.8M957.7,275.6V380.3M973.8,294.5V359.8M989.2,288.7V361.3M996.7,282.9V369.4M1012.6,277.5V369.1M1022.1,297.2V352.2M1040.9,294.5V360.2M1047.3,254.7V397.3M1056.5,252.4V394.0M1064.4,294.0V355.6M1074.3,291.1V357.2M1085.6,267.5V375.8M1094.6,251.8V392.6M1111.2,281.1V373.0M1127.0,258.9V386.4M1135.0,295.7V358.6M1141.7,276.3V374.5M1152.8,264.0V388.0M1161.9,274.8V377.0M1170.5,281.7V370.1M1180.6,257.5V382.1M1194.3,295.1V359.5M1212.4,254.4V393.2M1226.8,266.9V381.8M1234.6,252.1V392.0M1253.5,296.8V353.2M1265.7,271.4V377.8M1274.3,296.6V354.7M1286.0,297.4V354.1M1298.1,289.4V362.8M1315.5,267.0V375.5M1334.0,288.0V365.8M1345.7,296.4V353.2M1357.2,262.1V385.3M1363.5,260.1V392.0M1382.4,252.4V391.7M1390.4,253.4V386.4M1396.5,261.2V392.2M1410.6,264.6V386.3M1419.8,274.9V377.8M1426.1,266.5V386.5M1444.8,268.6V375.9M1463.7,254.5V387.3M1474.6,281.7V365.6M1488.9,265.7V389.5M1502.3,261.6V385.8M1511.9,280.7V370.9M1519.9,286.5V361.4M1526.4,283.7V365.9M1543.8,297.7V351.2M1556.8,280.4V374.8M1572.1,287.6V365.6M1588.0,265.6V376.4M1599.4,265.9V376.6M1610.0,279.6V367.3M1625.8,261.0V381.1M1631.9,279.8V375.2M1642.7,280.7V371.0M1650.2,297.6V354.3M1666.0,288.9V363.7M1684.5,293.7V357.5M1697.5,294.6V354.2M1708.0,269.6V373.6M1715.6,281.6V373.6M1730.7,269.2V373.3M1738.4,256.4V397.4M1746.7,251.1V402.7M1759.0,288.9V364.9M1767.3,267.2V383.6M1782.8,274.5V370.5M1801.2,283.6V371.1M1813.4,263.8V382.7M1820.6,272.8V372.6M1835.6,292.3V358.0M1846.1,271.9V372.4M1859.0,259.2V383.6M1869.0,259.1V389.9M1885.3,285.9V366.3M1903.3,276.4V375.5M1915.7,257.6V397.8M1931.1,256.0V397.1" stroke="#bde8eb" stroke-width="2.6" stroke-linecap="round" fill="none"/><rect x="532" y="436" width="66" height="163" fill="#1b1e20" fill-opacity="0.72"/><rect x="631" y="436" width="40" height="163" fill="#1b1e20" fill-opacity="0.72"/><rect x="714" y="436" width="28" height="163" fill="#1b1e20" fill-opacity="0.72"/><rect x="776" y="436" width="45" height="163" fill="#1b1e20" fill-opacity="0.72"/><rect x="901" y="436" width="27" height="163" fill="#1b1e20" fill-opacity="0.72"/><rect x="562" y="627" width="68" height="163" fill="#1b1e20" fill-opacity="0.72"/><rect x="662" y="627" width="54" height="163" fill="#1b1e20" fill-opacity="0.72"/><rect x="735" y="627" width="43" height="163" fill="#1b1e20" fill-opacity="0.72"/><rect x="814" y="627" width="46" height="163" fill="#1b1e20" fill-opacity="0.72"/><rect x="947" y="627" width="32" height="163" fill="#1b1e20" fill-opacity="0.72"/><rect x="479" y="818" width="72" height="163" fill="#1b1e20" fill-opacity="0.72"/><rect x="625" y="818" width="22" height="163" fill="#1b1e20" fill-opacity="0.72"/><rect x="693" y="818" width="31" height="163" fill="#1b1e20" fill-opacity="0.72"/><rect x="847" y="818" width="60" height="163" fill="#1b1e20" fill-opacity="0.72"/><rect x="659" y="1009" width="30" height="100" fill="#1b1e20" fill-opacity="0.72"/></svg>
<div class="a" style="left:470px;top:220px;width:18px;height:860px;background:linear-gradient(to right,#34552a,#3f6e28 60%,#4b7f2c 68%,#8fcd52 72%,#8fcd52 100%)"></div>
<svg class="a" style="left:472px;top:191px" width="26" height="20"><path d="M1,1 H25 L13,18 Z" fill="#8ed14f"/></svg>
<svg class="a" style="left:0;top:0" width="1920" height="1080" viewBox="0 0 1920 1080"><defs><linearGradient id="hc" x1="0" y1="0" x2="0" y2="1"><stop offset="0" stop-color="#6ba4b6"/><stop offset="1" stop-color="#568fa1"/></linearGradient></defs><rect x="532" y="413" width="66" height="24" rx="3" fill="url(#hc)"/><path d="M537,425 h8 M540,421.5 l4,3.5 l-4,3.5 M537,421 v8" stroke="#e6f2f5" stroke-width="2" fill="none"/><path d="M533.0,516.9 L534.0,516.9 L535.0,516.9 L536.0,516.9 L537.0,516.9 L538.0,516.9 L539.0,512.5 L540.0,511.0 L541.0,509.3 L542.0,508.9 L543.0,504.8 L544.0,508.1 L545.0,508.1 L546.0,507.8 L547.0,507.1 L548.0,496.3 L549.0,507.1 L550.0,503.2 L551.0,503.2 L552.0,503.2 L553.0,503.2 L554.0,503.2 L555.0,504.7 L556.0,504.7 L557.0,509.8 L558.0,497.1 L559.0,502.8 L560.0,502.8 L561.0,502.8 L562.0,504.9 L563.0,508.7 L564.0,506.1 L565.0,507.3 L566.0,507.3 L567.0,503.0 L568.0,504.2 L569.0,504.2 L570.0,504.2 L571.0,502.5 L572.0,509.4 L573.0,509.4 L574.0,507.6 L575.0,512.2 L576.0,510.7 L577.0,516.9 L578.0,516.9 L579.0,516.9 L580.0,516.9 L581.0,516.9 L582.0,516.9 L583.0,516.9 L584.0,516.9 L585.0,516.9 L586.0,516.9 L587.0,516.9 L588.0,516.9 L589.0,516.9 L590.0,516.9 L591.0,516.9 L592.0,516.9 L593.0,516.9 L594.0,516.9 L595.0,516.9 L596.0,516.9 L597.0,516.9 L598.0,516.9 L598.0,520.1 L597.0,520.1 L596.0,520.1 L595.0,520.1 L594.0,520.1 L593.0,520.1 L592.0,520.1 L591.0,520.1 L590.0,520.1 L589.0,520.1 L588.0,520.1 L587.0,520.1 L586.0,520.1 L585.0,520.1 L584.0,520.1 L583.0,520.1 L582.0,520.1 L581.0,520.1 L580.0,520.1 L579.0,520.1 L578.0,520.1 L577.0,520.1 L576.0,526.8 L575.0,525.4 L574.0,530.4 L573.0,527.4 L572.0,527.3 L571.0,533.0 L570.0,533.8 L569.0,531.5 L568.0,532.2 L567.0,533.0 L566.0,530.2 L565.0,530.4 L564.0,529.7 L563.0,527.8 L562.0,530.9 L561.0,533.1 L560.0,532.6 L559.0,532.9 L558.0,536.8 L557.0,526.4 L556.0,530.9 L555.0,530.3 L554.0,534.3 L553.0,532.0 L552.0,533.7 L551.0,532.0 L550.0,532.8 L549.0,528.2 L548.0,540.4 L547.0,530.2 L546.0,528.8 L545.0,527.8 L544.0,529.7 L543.0,532.3 L542.0,526.7 L541.0,526.9 L540.0,526.3 L539.0,524.5 L538.0,520.1 L537.0,520.1 L536.0,520.1 L535.0,520.1 L534.0,520.1 L533.0,520.1Z" fill="#b4ebe8"/><rect x="631" y="413" width="40" height="24" rx="3" fill="url(#hc)"/><path d="M636,425 h8 M639,421.5 l4,3.5 l-4,3.5 M636,421 v8" stroke="#e6f2f5" stroke-width="2" fill="none"/><path d="M630.0,516.9 L631.0,516.9 L632.0,510.8 L633.0,507.5 L634.0,508.2 L635.0,508.9 L636.0,508.9 L637.0,496.2 L638.0,499.4 L639.0,503.9 L640.0,509.7 L641.0,509.7 L642.0,509.7 L643.0,509.7 L644.0,506.8 L645.0,506.8 L646.0,506.8 L647.0,503.3 L648.0,503.3 L649.0,496.5 L650.0,506.2 L651.0,506.2 L652.0,504.8 L653.0,504.8 L654.0,504.6 L655.0,504.6 L656.0,507.8 L657.0,509.2 L658.0,506.3 L659.0,507.8 L660.0,504.9 L661.0,504.9 L662.0,502.4 L663.0,502.4 L664.0,502.4 L665.0,507.4 L666.0,507.4 L667.0,504.2 L668.0,505.2 L669.0,507.6 L670.0,510.8 L671.0,516.9 L671.0,520.1 L670.0,525.5 L669.0,530.3 L668.0,531.9 L667.0,530.7 L666.0,529.7 L665.0,529.8 L664.0,533.4 L663.0,533.0 L662.0,533.7 L661.0,533.0 L660.0,533.4 L659.0,530.2 L658.0,530.6 L657.0,526.9 L656.0,527.8 L655.0,533.2 L654.0,531.7 L653.0,531.8 L652.0,532.6 L651.0,531.3 L650.0,530.1 L649.0,537.0 L648.0,533.1 L647.0,535.1 L646.0,530.5 L645.0,528.6 L644.0,528.7 L643.0,526.4 L642.0,526.6 L641.0,526.3 L640.0,526.2 L639.0,533.3 L638.0,534.4 L637.0,538.0 L636.0,528.6 L635.0,528.3 L634.0,528.2 L633.0,530.1 L632.0,526.8 L631.0,520.1 L630.0,520.1Z" fill="#b4ebe8"/><rect x="714" y="413" width="28" height="24" rx="3" fill="url(#hc)"/><path d="M719,425 h8 M722,421.5 l4,3.5 l-4,3.5 M719,421 v8" stroke="#e6f2f5" stroke-width="2" fill="none"/><path d="M714.0,516.9 L715.0,516.9 L716.0,516.9 L717.0,516.9 L718.0,508.5 L719.0,503.4 L720.0,501.9 L721.0,504.4 L722.0,502.2 L723.0,509.5 L724.0,502.7 L725.0,502.7 L726.0,502.7 L727.0,507.2 L728.0,507.2 L729.0,507.2 L730.0,507.2 L731.0,505.5 L732.0,505.5 L733.0,509.1 L734.0,509.1 L735.0,509.4 L736.0,509.4 L737.0,503.7 L738.0,503.8 L739.0,508.8 L740.0,511.7 L741.0,516.9 L742.0,516.9 L742.0,520.1 L741.0,520.1 L740.0,524.4 L739.0,527.0 L738.0,533.9 L737.0,533.5 L736.0,527.1 L735.0,526.7 L734.0,528.3 L733.0,527.0 L732.0,532.0 L731.0,530.0 L730.0,530.2 L729.0,530.0 L728.0,529.5 L727.0,529.6 L726.0,534.8 L725.0,532.4 L724.0,532.9 L723.0,527.9 L722.0,533.0 L721.0,531.2 L720.0,533.3 L719.0,532.6 L718.0,527.2 L717.0,520.1 L716.0,520.1 L715.0,520.1 L714.0,520.1Z" fill="#b4ebe8"/><rect x="776" y="413" width="45" height="24" rx="3" fill="url(#hc)"/><path d="M781,425 h8 M784,421.5 l4,3.5 l-4,3.5 M781,421 v8" stroke="#e6f2f5" stroke-width="2" fill="none"/><path d="M776.0,516.9 L777.0,509.5 L778.0,516.6 L779.0,515.8 L780.0,514.5 L781.0,504.0 L782.0,510.3 L783.0,508.7 L784.0,507.2 L785.0,500.3 L786.0,509.3 L787.0,509.4 L788.0,505.1 L789.0,505.3 L790.0,508.2 L791.0,507.7 L792.0,507.8 L793.0,508.7 L794.0,505.9 L795.0,507.1 L796.0,507.2 L797.0,509.9 L798.0,508.2 L799.0,510.4 L800.0,510.5 L801.0,510.6 L802.0,507.6 L803.0,507.8 L804.0,508.0 L805.0,508.2 L806.0,511.8 L807.0,511.9 L808.0,512.1 L809.0,512.3 L810.0,512.5 L811.0,512.4 L812.0,511.0 L813.0,512.9 L814.0,511.7 L815.0,512.1 L816.0,513.3 L817.0,513.7 L818.0,514.2 L819.0,515.2 L820.0,516.0 L821.0,516.9 L821.0,520.1 L820.0,521.1 L819.0,521.5 L818.0,522.3 L817.0,522.9 L816.0,523.1 L815.0,524.7 L814.0,525.5 L813.0,523.7 L812.0,525.9 L811.0,523.7 L810.0,524.3 L809.0,524.4 L808.0,524.2 L807.0,525.1 L806.0,524.4 L805.0,527.6 L804.0,528.9 L803.0,529.7 L802.0,529.6 L801.0,526.3 L800.0,525.9 L799.0,526.5 L798.0,528.0 L797.0,527.5 L796.0,529.1 L795.0,530.1 L794.0,530.8 L793.0,528.4 L792.0,527.8 L791.0,529.1 L790.0,529.2 L789.0,532.1 L788.0,530.8 L787.0,526.6 L786.0,527.7 L785.0,526.5 L784.0,529.1 L783.0,526.8 L782.0,526.5 L781.0,523.3 L780.0,522.3 L779.0,521.1 L778.0,520.4 L777.0,520.1 L776.0,520.1Z" fill="#b4ebe8"/><rect x="901" y="413" width="27" height="24" rx="3" fill="url(#hc)"/><path d="M906,425 h8 M909,421.5 l4,3.5 l-4,3.5 M906,421 v8" stroke="#e6f2f5" stroke-width="2" fill="none"/><path d="M902.0,516.9 L903.0,501.3 L904.0,495.0 L905.0,493.7 L906.0,482.2 L907.0,482.1 L908.0,486.2 L909.0,484.4 L910.0,483.0 L911.0,481.9 L912.0,442.9 L913.0,442.9 L914.0,478.5 L915.0,478.5 L916.0,479.8 L917.0,480.4 L918.0,481.2 L919.0,482.4 L920.0,483.8 L921.0,485.2 L922.0,487.4 L923.0,490.0 L924.0,493.3 L925.0,497.4 L926.0,503.0 L927.0,516.9 L927.0,520.1 L926.0,534.3 L925.0,538.6 L924.0,543.7 L923.0,546.9 L922.0,552.0 L921.0,552.8 L920.0,556.3 L919.0,551.2 L918.0,557.1 L917.0,555.5 L916.0,559.6 L915.0,556.5 L914.0,557.7 L913.0,594.1 L912.0,594.1 L911.0,555.2 L910.0,557.2 L909.0,555.1 L908.0,550.6 L907.0,556.9 L906.0,551.6 L905.0,542.9 L904.0,541.0 L903.0,536.1 L902.0,520.1Z" fill="#b4ebe8"/><rect x="562" y="604" width="68" height="24" rx="3" fill="url(#hc)"/><path d="M567,616 h8 M570,612.5 l4,3.5 l-4,3.5 M567,612 v8" stroke="#e6f2f5" stroke-width="2" fill="none"/><path d="M562.0,707.9 L563.0,707.9 L564.0,707.9 L565.0,707.9 L566.0,707.9 L567.0,707.9 L568.0,707.9 L569.0,707.9 L570.0,707.9 L571.0,707.9 L572.0,705.5 L573.0,703.9 L574.0,702.6 L575.0,697.7 L576.0,695.9 L577.0,695.6 L578.0,699.8 L579.0,696.3 L580.0,697.6 L581.0,697.6 L582.0,698.0 L583.0,697.4 L584.0,700.4 L585.0,698.6 L586.0,698.6 L587.0,698.6 L588.0,698.3 L589.0,695.4 L590.0,701.5 L591.0,697.3 L592.0,697.3 L593.0,689.7 L594.0,696.7 L595.0,696.7 L596.0,696.7 L597.0,697.6 L598.0,696.0 L599.0,696.0 L600.0,698.4 L601.0,700.1 L602.0,700.1 L603.0,700.1 L604.0,699.7 L605.0,699.7 L606.0,699.6 L607.0,699.6 L608.0,699.6 L609.0,699.6 L610.0,696.0 L611.0,696.0 L612.0,696.0 L613.0,699.0 L614.0,699.9 L615.0,699.9 L616.0,699.9 L617.0,699.4 L618.0,696.1 L619.0,700.7 L620.0,699.7 L621.0,701.5 L622.0,703.8 L623.0,707.9 L624.0,707.9 L625.0,707.9 L626.0,707.9 L627.0,707.9 L628.0,707.9 L629.0,707.9 L630.0,707.9 L630.0,711.1 L629.0,711.1 L628.0,711.1 L627.0,711.1 L626.0,711.1 L625.0,711.1 L624.0,711.1 L623.0,711.1 L622.0,715.1 L621.0,718.1 L620.0,720.1 L619.0,718.2 L618.0,724.0 L617.0,719.7 L616.0,719.1 L615.0,719.5 L614.0,718.3 L613.0,719.9 L612.0,721.1 L611.0,723.0 L610.0,724.1 L609.0,718.5 L608.0,718.9 L607.0,718.5 L606.0,719.6 L605.0,719.6 L604.0,718.8 L603.0,718.9 L602.0,717.9 L601.0,717.5 L600.0,719.4 L599.0,721.4 L598.0,723.7 L597.0,722.4 L596.0,721.2 L595.0,722.7 L594.0,721.3 L593.0,726.4 L592.0,721.4 L591.0,720.5 L590.0,717.9 L589.0,723.1 L588.0,721.4 L587.0,721.3 L586.0,718.9 L585.0,719.1 L584.0,718.7 L583.0,722.1 L582.0,720.4 L581.0,720.9 L580.0,721.6 L579.0,721.0 L578.0,719.0 L577.0,723.1 L576.0,723.8 L575.0,721.7 L574.0,715.8 L573.0,714.6 L572.0,713.8 L571.0,711.1 L570.0,711.1 L569.0,711.1 L568.0,711.1 L567.0,711.1 L566.0,711.1 L565.0,711.1 L564.0,711.1 L563.0,711.1 L562.0,711.1Z" fill="#b4ebe8"/><rect x="662" y="604" width="54" height="24" rx="3" fill="url(#hc)"/><path d="M667,616 h8 M670,612.5 l4,3.5 l-4,3.5 M667,612 v8" stroke="#e6f2f5" stroke-width="2" fill="none"/><path d="M662.0,707.9 L663.0,707.9 L664.0,707.9 L665.0,707.9 L666.0,707.9 L667.0,707.9 L668.0,707.9 L669.0,707.9 L670.0,707.9 L671.0,703.5 L672.0,701.6 L673.0,698.6 L674.0,696.9 L675.0,696.0 L676.0,683.7 L677.0,692.8 L678.0,693.2 L679.0,693.2 L680.0,693.6 L681.0,689.0 L682.0,689.0 L683.0,689.0 L684.0,692.5 L685.0,692.5 L686.0,694.4 L687.0,684.1 L688.0,689.9 L689.0,689.9 L690.0,690.0 L691.0,690.0 L692.0,698.1 L693.0,694.8 L694.0,694.8 L695.0,694.8 L696.0,694.8 L697.0,694.8 L698.0,694.8 L699.0,691.0 L700.0,691.7 L701.0,691.7 L702.0,689.5 L703.0,694.2 L704.0,692.5 L705.0,692.5 L706.0,697.0 L707.0,698.3 L708.0,698.3 L709.0,692.2 L710.0,692.2 L711.0,694.2 L712.0,699.0 L713.0,700.4 L714.0,702.1 L715.0,704.3 L716.0,707.9 L716.0,711.1 L715.0,714.8 L714.0,716.4 L713.0,717.4 L712.0,718.4 L711.0,723.5 L710.0,727.4 L709.0,726.5 L708.0,720.3 L707.0,720.7 L706.0,723.1 L705.0,727.5 L704.0,724.4 L703.0,723.1 L702.0,727.1 L701.0,724.7 L700.0,727.7 L699.0,725.9 L698.0,725.6 L697.0,722.4 L696.0,723.0 L695.0,725.1 L694.0,725.0 L693.0,724.1 L692.0,719.5 L691.0,728.6 L690.0,727.2 L689.0,726.9 L688.0,730.9 L687.0,734.9 L686.0,722.6 L685.0,726.6 L684.0,726.6 L683.0,729.7 L682.0,727.7 L681.0,731.4 L680.0,726.8 L679.0,726.3 L678.0,726.2 L677.0,727.6 L676.0,734.8 L675.0,721.3 L674.0,721.4 L673.0,720.7 L672.0,717.1 L671.0,714.6 L670.0,711.1 L669.0,711.1 L668.0,711.1 L667.0,711.1 L666.0,711.1 L665.0,711.1 L664.0,711.1 L663.0,711.1 L662.0,711.1Z" fill="#b4ebe8"/><rect x="735" y="604" width="43" height="24" rx="3" fill="url(#hc)"/><path d="M740,616 h8 M743,612.5 l4,3.5 l-4,3.5 M740,612 v8" stroke="#e6f2f5" stroke-width="2" fill="none"/><path d="M735.0,707.9 L736.0,707.9 L737.0,707.9 L738.0,707.9 L739.0,707.9 L740.0,701.7 L741.0,700.6 L742.0,694.3 L743.0,693.5 L744.0,693.5 L745.0,698.7 L746.0,696.1 L747.0,694.6 L748.0,694.7 L749.0,695.9 L750.0,695.9 L751.0,695.9 L752.0,697.1 L753.0,697.1 L754.0,694.0 L755.0,686.3 L756.0,698.0 L757.0,700.4 L758.0,693.2 L759.0,696.4 L760.0,696.4 L761.0,696.4 L762.0,690.3 L763.0,693.7 L764.0,699.5 L765.0,699.5 L766.0,699.5 L767.0,699.5 L768.0,697.4 L769.0,697.9 L770.0,700.0 L771.0,702.9 L772.0,707.9 L773.0,707.9 L774.0,707.9 L775.0,707.9 L776.0,707.9 L777.0,707.9 L778.0,707.9 L778.0,711.1 L777.0,711.1 L776.0,711.1 L775.0,711.1 L774.0,711.1 L773.0,711.1 L772.0,711.1 L771.0,715.7 L770.0,719.8 L769.0,722.1 L768.0,722.5 L767.0,720.2 L766.0,719.0 L765.0,719.3 L764.0,718.8 L763.0,725.9 L762.0,727.5 L761.0,723.9 L760.0,723.3 L759.0,721.4 L758.0,723.5 L757.0,718.7 L756.0,719.4 L755.0,729.8 L754.0,725.3 L753.0,722.1 L752.0,721.5 L751.0,723.0 L750.0,724.2 L749.0,724.5 L748.0,723.2 L747.0,722.9 L746.0,723.9 L745.0,719.8 L744.0,723.9 L743.0,725.1 L742.0,723.8 L741.0,717.4 L740.0,717.5 L739.0,711.1 L738.0,711.1 L737.0,711.1 L736.0,711.1 L735.0,711.1Z" fill="#b4ebe8"/><rect x="814" y="604" width="46" height="24" rx="3" fill="url(#hc)"/><path d="M819,616 h8 M822,612.5 l4,3.5 l-4,3.5 M819,612 v8" stroke="#e6f2f5" stroke-width="2" fill="none"/><path d="M814.0,707.9 L815.0,704.4 L816.0,702.3 L817.0,699.6 L818.0,693.6 L819.0,696.4 L820.0,700.0 L821.0,700.0 L822.0,701.7 L823.0,701.3 L824.0,701.3 L825.0,693.1 L826.0,701.3 L827.0,701.3 L828.0,701.3 L829.0,701.3 L830.0,701.9 L831.0,701.9 L832.0,698.6 L833.0,697.9 L834.0,698.1 L835.0,698.1 L836.0,695.4 L837.0,697.4 L838.0,697.4 L839.0,697.4 L840.0,696.8 L841.0,696.8 L842.0,695.9 L843.0,696.2 L844.0,699.4 L845.0,699.4 L846.0,699.4 L847.0,695.7 L848.0,695.7 L849.0,696.5 L850.0,701.0 L851.0,702.6 L852.0,704.6 L853.0,707.9 L854.0,707.9 L855.0,707.9 L856.0,707.9 L857.0,707.9 L858.0,707.9 L859.0,707.9 L860.0,707.9 L860.0,711.1 L859.0,711.1 L858.0,711.1 L857.0,711.1 L856.0,711.1 L855.0,711.1 L854.0,711.1 L853.0,711.1 L852.0,714.8 L851.0,715.7 L850.0,717.9 L849.0,721.8 L848.0,721.7 L847.0,722.6 L846.0,718.8 L845.0,718.6 L844.0,719.8 L843.0,721.3 L842.0,724.0 L841.0,723.2 L840.0,723.5 L839.0,721.3 L838.0,720.7 L837.0,721.4 L836.0,723.4 L835.0,719.5 L834.0,720.9 L833.0,721.3 L832.0,719.2 L831.0,716.6 L830.0,717.8 L829.0,717.9 L828.0,716.6 L827.0,716.9 L826.0,716.6 L825.0,725.4 L824.0,717.4 L823.0,717.5 L822.0,716.3 L821.0,718.6 L820.0,719.9 L819.0,722.6 L818.0,723.5 L817.0,720.0 L816.0,715.8 L815.0,714.7 L814.0,711.1Z" fill="#b4ebe8"/><rect x="947" y="604" width="32" height="24" rx="3" fill="url(#hc)"/><path d="M952,616 h8 M955,612.5 l4,3.5 l-4,3.5 M952,612 v8" stroke="#e6f2f5" stroke-width="2" fill="none"/><path d="M947.0,707.9 L948.0,694.2 L949.0,690.6 L950.0,685.1 L951.0,681.9 L952.0,679.0 L953.0,679.1 L954.0,668.9 L955.0,666.8 L956.0,665.1 L957.0,675.0 L958.0,664.4 L959.0,670.6 L960.0,636.0 L961.0,636.0 L962.0,669.3 L963.0,669.2 L964.0,669.3 L965.0,669.6 L966.0,674.1 L967.0,661.2 L968.0,666.3 L969.0,674.3 L970.0,669.9 L971.0,671.5 L972.0,673.0 L973.0,670.9 L974.0,679.9 L975.0,680.4 L976.0,688.3 L977.0,691.8 L978.0,694.8 L979.0,707.9 L979.0,711.1 L978.0,723.0 L977.0,728.6 L976.0,728.8 L975.0,736.0 L974.0,739.2 L973.0,751.4 L972.0,745.4 L971.0,743.7 L970.0,746.4 L969.0,747.1 L968.0,754.6 L967.0,762.7 L966.0,746.3 L965.0,751.4 L964.0,752.4 L963.0,749.6 L962.0,748.0 L961.0,783.0 L960.0,783.0 L959.0,746.0 L958.0,752.3 L957.0,744.6 L956.0,750.2 L955.0,754.5 L954.0,752.2 L953.0,738.0 L952.0,741.2 L951.0,739.4 L950.0,735.6 L949.0,727.7 L948.0,725.5 L947.0,711.1Z" fill="#b4ebe8"/><rect x="479" y="795" width="72" height="24" rx="3" fill="url(#hc)"/><path d="M484,807 h8 M487,803.5 l4,3.5 l-4,3.5 M484,803 v8" stroke="#e6f2f5" stroke-width="2" fill="none"/><path d="M479.0,898.9 L480.0,898.9 L481.0,898.9 L482.0,898.9 L483.0,898.9 L484.0,895.5 L485.0,891.4 L486.0,889.5 L487.0,889.1 L488.0,888.5 L489.0,887.0 L490.0,886.1 L491.0,885.5 L492.0,885.1 L493.0,884.9 L494.0,884.8 L495.0,885.0 L496.0,885.9 L497.0,885.3 L498.0,887.3 L499.0,889.3 L500.0,890.3 L501.0,892.0 L502.0,893.1 L503.0,894.6 L504.0,896.8 L505.0,897.4 L506.0,894.2 L507.0,892.3 L508.0,890.8 L509.0,889.5 L510.0,888.7 L511.0,887.9 L512.0,887.3 L513.0,886.8 L514.0,886.5 L515.0,886.5 L516.0,887.2 L517.0,887.4 L518.0,884.1 L519.0,888.0 L520.0,888.6 L521.0,889.3 L522.0,890.2 L523.0,889.5 L524.0,891.2 L525.0,893.4 L526.0,897.0 L527.0,895.5 L528.0,894.6 L529.0,893.0 L530.0,891.0 L531.0,890.6 L532.0,890.1 L533.0,889.5 L534.0,889.0 L535.0,888.2 L536.0,888.0 L537.0,884.2 L538.0,883.8 L539.0,886.4 L540.0,886.7 L541.0,885.1 L542.0,885.9 L543.0,888.2 L544.0,889.3 L545.0,890.1 L546.0,891.6 L547.0,894.2 L548.0,898.9 L549.0,898.9 L550.0,898.9 L551.0,898.9 L551.0,902.1 L550.0,902.1 L549.0,902.1 L548.0,902.1 L547.0,907.0 L546.0,909.4 L545.0,909.5 L544.0,910.7 L543.0,911.8 L542.0,915.6 L541.0,915.0 L540.0,912.8 L539.0,913.3 L538.0,917.2 L537.0,915.0 L536.0,913.1 L535.0,911.7 L534.0,911.6 L533.0,910.7 L532.0,910.3 L531.0,909.6 L530.0,910.4 L529.0,907.3 L528.0,906.7 L527.0,904.9 L526.0,904.1 L525.0,907.7 L524.0,909.5 L523.0,911.2 L522.0,910.5 L521.0,911.3 L520.0,913.0 L519.0,913.1 L518.0,917.1 L517.0,912.3 L516.0,913.6 L515.0,913.4 L514.0,913.1 L513.0,914.4 L512.0,913.5 L511.0,913.2 L510.0,912.0 L509.0,911.6 L508.0,909.6 L507.0,908.2 L506.0,906.9 L505.0,903.6 L504.0,903.7 L503.0,905.6 L502.0,908.0 L501.0,907.8 L500.0,910.3 L499.0,911.1 L498.0,913.5 L497.0,916.3 L496.0,914.3 L495.0,914.8 L494.0,916.8 L493.0,915.8 L492.0,915.4 L491.0,916.0 L490.0,914.1 L489.0,913.3 L488.0,911.0 L487.0,911.0 L486.0,909.9 L485.0,909.9 L484.0,905.6 L483.0,902.1 L482.0,902.1 L481.0,902.1 L480.0,902.1 L479.0,902.1Z" fill="#b4ebe8"/><rect x="625" y="795" width="22" height="24" rx="3" fill="url(#hc)"/><path d="M630,807 h8 M633,803.5 l4,3.5 l-4,3.5 M630,803 v8" stroke="#e6f2f5" stroke-width="2" fill="none"/><path d="M625.0,898.9 L626.0,882.5 L627.0,876.0 L628.0,871.3 L629.0,867.7 L630.0,864.7 L631.0,867.5 L632.0,854.9 L633.0,854.9 L634.0,827.0 L635.0,827.0 L636.0,852.9 L637.0,856.3 L638.0,860.6 L639.0,864.6 L640.0,865.9 L641.0,865.7 L642.0,860.5 L643.0,863.8 L644.0,874.4 L645.0,878.6 L646.0,884.4 L647.0,898.9 L647.0,902.1 L646.0,918.2 L645.0,922.6 L644.0,924.7 L643.0,937.7 L642.0,940.2 L641.0,932.1 L640.0,938.4 L639.0,936.4 L638.0,941.7 L637.0,948.2 L636.0,946.5 L635.0,974.0 L634.0,974.0 L633.0,948.9 L632.0,946.7 L631.0,930.9 L630.0,939.7 L629.0,933.2 L628.0,932.5 L627.0,926.2 L626.0,920.0 L625.0,902.1Z" fill="#b4ebe8"/><rect x="693" y="795" width="31" height="24" rx="3" fill="url(#hc)"/><path d="M698,807 h8 M701,803.5 l4,3.5 l-4,3.5 M698,803 v8" stroke="#e6f2f5" stroke-width="2" fill="none"/><path d="M693.0,898.9 L694.0,898.9 L695.0,898.9 L696.0,898.9 L697.0,898.9 L698.0,894.4 L699.0,891.9 L700.0,889.2 L701.0,892.5 L702.0,892.5 L703.0,886.4 L704.0,891.5 L705.0,891.9 L706.0,891.9 L707.0,883.6 L708.0,878.9 L709.0,888.8 L710.0,888.8 L711.0,892.5 L712.0,886.1 L713.0,891.1 L714.0,891.1 L715.0,891.1 L716.0,887.2 L717.0,887.2 L718.0,887.2 L719.0,891.3 L720.0,893.9 L721.0,898.9 L722.0,898.9 L723.0,898.9 L724.0,898.9 L724.0,902.1 L723.0,902.1 L722.0,902.1 L721.0,902.1 L720.0,906.8 L719.0,910.0 L718.0,914.5 L717.0,913.9 L716.0,912.0 L715.0,908.7 L714.0,910.2 L713.0,908.6 L712.0,912.8 L711.0,907.5 L710.0,911.9 L709.0,912.3 L708.0,918.8 L707.0,915.9 L706.0,908.1 L705.0,909.6 L704.0,909.4 L703.0,914.4 L702.0,907.5 L701.0,907.5 L700.0,912.8 L699.0,908.0 L698.0,905.7 L697.0,902.1 L696.0,902.1 L695.0,902.1 L694.0,902.1 L693.0,902.1Z" fill="#b4ebe8"/><rect x="847" y="795" width="60" height="24" rx="3" fill="url(#hc)"/><path d="M852,807 h8 M855,803.5 l4,3.5 l-4,3.5 M852,803 v8" stroke="#e6f2f5" stroke-width="2" fill="none"/><path d="M847.0,898.9 L848.0,898.9 L849.0,898.9 L850.0,894.5 L851.0,892.0 L852.0,890.1 L853.0,885.3 L854.0,889.7 L855.0,891.6 L856.0,891.6 L857.0,892.2 L858.0,892.2 L859.0,888.2 L860.0,892.1 L861.0,891.0 L862.0,885.7 L863.0,886.4 L864.0,881.4 L865.0,888.9 L866.0,888.9 L867.0,888.7 L868.0,891.1 L869.0,887.1 L870.0,892.3 L871.0,892.5 L872.0,892.5 L873.0,892.5 L874.0,892.5 L875.0,887.5 L876.0,887.5 L877.0,891.8 L878.0,891.8 L879.0,891.8 L880.0,891.8 L881.0,887.0 L882.0,888.7 L883.0,888.3 L884.0,888.3 L885.0,886.6 L886.0,891.1 L887.0,889.0 L888.0,888.0 L889.0,890.7 L890.0,890.7 L891.0,890.9 L892.0,889.7 L893.0,889.5 L894.0,889.5 L895.0,886.6 L896.0,886.6 L897.0,887.0 L898.0,888.4 L899.0,894.1 L900.0,891.2 L901.0,895.4 L902.0,898.9 L903.0,898.9 L904.0,898.9 L905.0,898.9 L906.0,898.9 L907.0,898.9 L907.0,902.1 L906.0,902.1 L905.0,902.1 L904.0,902.1 L903.0,902.1 L902.0,902.1 L901.0,906.1 L900.0,909.4 L899.0,906.9 L898.0,912.8 L897.0,914.6 L896.0,914.6 L895.0,913.5 L894.0,911.8 L893.0,911.0 L892.0,911.4 L891.0,910.7 L890.0,911.1 L889.0,909.4 L888.0,913.9 L887.0,912.5 L886.0,910.2 L885.0,915.2 L884.0,913.5 L883.0,912.8 L882.0,912.7 L881.0,912.5 L880.0,909.9 L879.0,908.5 L878.0,909.4 L877.0,908.1 L876.0,913.9 L875.0,911.6 L874.0,908.1 L873.0,908.3 L872.0,908.6 L871.0,908.2 L870.0,907.6 L869.0,912.2 L868.0,909.2 L867.0,910.7 L866.0,912.4 L865.0,910.6 L864.0,919.6 L863.0,914.9 L862.0,914.3 L861.0,909.4 L860.0,908.9 L859.0,913.7 L858.0,907.9 L857.0,908.3 L856.0,908.8 L855.0,909.9 L854.0,912.2 L853.0,915.0 L852.0,910.1 L851.0,907.9 L850.0,906.9 L849.0,902.1 L848.0,902.1 L847.0,902.1Z" fill="#b4ebe8"/><rect x="659" y="986" width="30" height="24" rx="3" fill="url(#hc)"/><path d="M664,998 h8 M667,994.5 l4,3.5 l-4,3.5 M664,994 v8" stroke="#e6f2f5" stroke-width="2" fill="none"/></svg>
<div class="t" style="left:552px;top:417px;font-size:18px;font-weight:bold;color:#e9f3f5;transform:scaleX(.95);transform-origin:0 0">unti..</div>
<div class="t" style="left:582px;top:608px;font-size:18px;font-weight:bold;color:#e9f3f5;transform:scaleX(.95);transform-origin:0 0">unti..</div>
<div class="t" style="left:682px;top:608px;font-size:18px;font-weight:bold;color:#a9c3cb;transform:scaleX(.95);transform-origin:0 0">un..</div>
<div class="t" style="left:499px;top:799px;font-size:18px;font-weight:bold;color:#e9f3f5;transform:scaleX(.95);transform-origin:0 0">unti..)</div>
<div class="t" style="left:867px;top:799px;font-size:18px;font-weight:bold;color:#e9f3f5;transform:scaleX(.95);transform-origin:0 0">unt..</div>
<div class="t" style="left:719px;top:222px;font-size:21px;font-weight:bold;color:#eef3f5;transform:scaleX(.9);transform-origin:0 0">Beat</div>
<svg class="a" style="left:700px;top:222px" width="20" height="24"><path d="M4,12 h9 M9,8 l4,4 l-4,4 M4,8 v8" stroke="#e6f2f5" stroke-width="2" fill="none"/></svg>
<svg class="a" style="left:1285px;top:319px" width="351" height="642" viewBox="1285 319 351 642"><defs><filter id="bv" x="-10%" y="-30%" width="120%" height="160%"><feGaussianBlur stdDeviation="2 30"/></filter><filter id="be" x="-5%" y="-5%" width="110%" height="110%"><feGaussianBlur stdDeviation="2.6 1"/></filter><filter id="bs" x="-20%" y="-5%" width="140%" height="110%"><feGaussianBlur stdDeviation="4 2"/></filter></defs><g filter="url(#be)"><rect x="1295" y="329" width="331" height="622" fill="#ebebeb"/></g><g filter="url(#bs)"><rect x="1300" y="334" width="10" height="612" fill="#707070" fill-opacity="0.16"/><rect x="1320" y="334" width="8" height="612" fill="#707070" fill-opacity="0.1"/><rect x="1520" y="334" width="16" height="612" fill="#707070" fill-opacity="0.16"/><rect x="1545" y="334" width="12" height="612" fill="#707070" fill-opacity="0.14"/><rect x="1566" y="334" width="16" height="612" fill="#707070" fill-opacity="0.2"/><rect x="1590" y="334" width="10" height="612" fill="#707070" fill-opacity="0.22"/><rect x="1606" y="334" width="12" height="612" fill="#707070" fill-opacity="0.18"/></g><clipPath id="ovc"><rect x="1295" y="329" width="331" height="622"/></clipPath><g clip-path="url(#ovc)"><g filter="url(#bv)"><path d="M1283.0,583.7 L1286.0,577.6 L1289.0,574.9 L1292.0,567.4 L1295.0,577.7 L1298.0,568.2 L1301.0,613.6 L1304.0,591.1 L1307.0,566.6 L1310.0,581.4 L1313.0,568.4 L1316.0,608.3 L1319.0,590.0 L1322.0,601.2 L1325.0,585.8 L1328.0,584.1 L1331.0,612.5 L1334.0,602.0 L1337.0,598.6 L1340.0,565.9 L1343.0,573.4 L1346.0,604.2 L1349.0,571.5 L1352.0,604.9 L1355.0,580.3 L1358.0,605.2 L1361.0,611.4 L1364.0,566.9 L1367.0,600.5 L1370.0,600.1 L1373.0,560.8 L1376.0,566.3 L1379.0,595.9 L1382.0,561.5 L1385.0,582.9 L1388.0,575.7 L1391.0,599.7 L1394.0,562.0 L1397.0,574.7 L1400.0,560.5 L1403.0,564.1 L1406.0,594.3 L1409.0,591.1 L1412.0,597.8 L1415.0,599.6 L1418.0,578.4 L1421.0,567.4 L1424.0,575.9 L1427.0,577.8 L1430.0,569.5 L1433.0,585.3 L1436.0,591.8 L1439.0,565.3 L1442.0,560.8 L1445.0,579.0 L1448.0,602.5 L1451.0,555.8 L1454.0,550.4 L1457.0,553.3 L1460.0,579.4 L1463.0,566.8 L1466.0,553.5 L1469.0,564.0 L1472.0,558.5 L1475.0,578.3 L1478.0,554.7 L1481.0,550.0 L1484.0,586.1 L1487.0,598.1 L1490.0,586.6 L1493.0,554.7 L1496.0,585.5 L1499.0,573.2 L1502.0,584.4 L1505.0,557.4 L1508.0,586.6 L1511.0,561.9 L1514.0,566.4 L1517.0,587.3 L1520.0,547.8 L1523.0,567.3 L1526.0,584.5 L1529.0,566.8 L1532.0,595.0 L1535.0,587.0 L1538.0,559.3 L1541.0,566.9 L1544.0,560.8 L1547.0,587.5 L1550.0,585.9 L1553.0,573.7 L1556.0,586.7 L1559.0,596.4 L1562.0,590.8 L1565.0,604.1 L1568.0,592.5 L1571.0,561.4 L1574.0,563.1 L1577.0,580.2 L1580.0,586.9 L1583.0,595.3 L1586.0,608.2 L1589.0,599.0 L1592.0,573.2 L1595.0,569.0 L1598.0,595.0 L1601.0,573.5 L1604.0,574.3 L1607.0,578.5 L1610.0,580.3 L1613.0,575.6 L1616.0,596.0 L1619.0,578.8 L1622.0,600.6 L1625.0,590.3 L1628.0,575.9 L1631.0,579.9 L1634.0,600.2 L1637.0,566.9 L1637.0,752.1 L1634.0,701.3 L1631.0,732.2 L1628.0,738.4 L1625.0,716.3 L1622.0,700.6 L1619.0,734.0 L1616.0,707.6 L1613.0,738.8 L1610.0,731.7 L1607.0,734.3 L1604.0,740.9 L1601.0,742.0 L1598.0,709.2 L1595.0,748.9 L1592.0,742.6 L1589.0,703.1 L1586.0,689.1 L1583.0,708.8 L1580.0,721.6 L1577.0,731.8 L1574.0,758.0 L1571.0,760.5 L1568.0,713.0 L1565.0,695.3 L1562.0,715.6 L1559.0,707.1 L1556.0,721.9 L1553.0,741.7 L1550.0,723.1 L1547.0,720.6 L1544.0,761.6 L1541.0,752.1 L1538.0,763.8 L1535.0,721.4 L1532.0,709.2 L1529.0,752.2 L1526.0,725.3 L1523.0,751.6 L1520.0,781.4 L1517.0,720.9 L1514.0,752.9 L1511.0,759.8 L1508.0,722.1 L1505.0,766.8 L1502.0,725.4 L1499.0,742.5 L1496.0,723.7 L1493.0,770.9 L1490.0,722.0 L1487.0,704.4 L1484.0,722.8 L1481.0,778.0 L1478.0,770.9 L1475.0,734.7 L1472.0,765.0 L1469.0,756.5 L1466.0,772.6 L1463.0,752.3 L1460.0,733.0 L1457.0,773.0 L1454.0,777.4 L1451.0,769.1 L1448.0,697.7 L1445.0,733.6 L1442.0,761.4 L1439.0,754.5 L1436.0,714.1 L1433.0,724.0 L1430.0,748.3 L1427.0,735.5 L1424.0,738.4 L1421.0,751.4 L1418.0,734.6 L1415.0,702.2 L1412.0,704.8 L1409.0,715.2 L1406.0,710.2 L1403.0,756.4 L1400.0,761.9 L1397.0,740.3 L1394.0,759.6 L1391.0,702.0 L1388.0,738.7 L1385.0,727.7 L1382.0,760.5 L1379.0,707.8 L1376.0,753.1 L1373.0,761.5 L1370.0,701.4 L1367.0,700.7 L1364.0,752.1 L1361.0,684.1 L1358.0,693.6 L1355.0,731.6 L1352.0,694.0 L1349.0,745.1 L1346.0,695.1 L1343.0,742.1 L1340.0,753.6 L1337.0,703.7 L1334.0,698.5 L1331.0,682.4 L1328.0,725.8 L1325.0,723.2 L1322.0,699.7 L1319.0,716.8 L1316.0,688.8 L1313.0,749.9 L1310.0,730.0 L1307.0,752.6 L1304.0,715.1 L1301.0,680.7 L1298.0,750.1 L1295.0,735.6 L1292.0,751.4 L1289.0,739.9 L1286.0,735.8 L1283.0,726.5Z" fill="#7e8083" fill-opacity="0.42"/><rect x="1283" y="611" width="355" height="64" fill="#5f6164" fill-opacity="0.85"/></g></g></svg>
<div class="a" style="left:367px;top:0;width:2px;height:118px;background:#2d3134"></div>
<div class="a" style="left:426px;top:0;width:2px;height:118px;background:#2f3336"></div>
<div class="a" style="left:0;top:58px;width:1920px;height:3px;background:#303437"></div>
<div class="t" style="left:-4px;top:18px;font-size:25px;color:#c4c9cc;transform:scaleX(0.6);transform-origin:0 0;-webkit-text-stroke:1px #c4c9cc">T</div>
<div class="t" style="left:11px;top:18px;font-size:25px;color:#c4c9cc;transform:scaleX(0.62);transform-origin:0 0;-webkit-text-stroke:1px #c4c9cc">ADD</div>
<div class="t" style="left:52px;top:18px;font-size:25px;color:#c4c9cc;transform:scaleX(0.58);transform-origin:0 0;-webkit-text-stroke:1px #c4c9cc">PATTERNS</div>
<div class="t" style="left:135px;top:18px;font-size:25px;color:#c4c9cc;transform:scaleX(0.62);transform-origin:0 0;-webkit-text-stroke:1px #c4c9cc">VIEW</div>
<div class="t" style="left:182px;top:18px;font-size:25px;color:#c4c9cc;transform:scaleX(0.61);transform-origin:0 0;-webkit-text-stroke:1px #c4c9cc">OPTIONS</div>
<div class="t" style="left:257px;top:18px;font-size:25px;color:#c4c9cc;transform:scaleX(0.6);transform-origin:0 0;-webkit-text-stroke:1px #c4c9cc">TOOLS</div>
<div class="t" style="left:316px;top:18px;font-size:25px;color:#c4c9cc;transform:scaleX(0.62);transform-origin:0 0;-webkit-text-stroke:1px #c4c9cc">HELP</div>
<div class="t" style="left:-2px;top:72px;font-size:18px;color:#aab0b3;transform:scaleX(1.0);-webkit-text-stroke:0.3px #aab0b3;transform-origin:0 0">ojeto demosntrativo.flp</div>
<div class="t" style="left:290px;top:95px;font-size:16px;font-weight:bold;color:#9fa5a8;transform:scaleX(.85);transform-origin:0 0">0&#39;30&quot;</div>
<svg class="a" style="left:339px;top:84px" width="20" height="28"><path d="M5,4 h10 l2,18 h-14 z" fill="#5f6568"/><rect x="2" y="21" width="16" height="5" rx="2" fill="#5a6063"/></svg>
<svg class="a" style="left:372px;top:6px" width="50" height="50"><circle cx="24" cy="24" r="19" fill="#2b2f32"/><path d="M13,39 A18,18 0 1 1 41,22" stroke="#d3d7d9" stroke-width="3" fill="none"/><circle cx="30" cy="27" r="1.8" fill="#b0b5b8"/><path d="M49,46 L49,38 L41,46 Z" fill="#74797c"/></svg>
<svg class="a" style="left:372px;top:66px" width="50" height="50"><circle cx="24" cy="24" r="19" fill="#2b2f32" stroke="#2f3336" stroke-width="1"/><circle cx="24" cy="15" r="2" fill="#b5babd"/><circle cx="24" cy="1.5" r="1.2" fill="#888"/><rect x="44" y="40" width="6" height="7" fill="#8a9093"/></svg>
<div class="a" style="left:434px;top:7px;width:147px;height:49px;background:#2a2e31;border-radius:25px"></div>
<div class="a" style="left:484px;top:7px;width:46px;height:46px;background:#26292c"></div>
<div class="t" style="left:449px;top:11px;font-size:13px;color:#5c6164;transform:scaleX(.85);transform-origin:0 0">PAT</div>
<div class="a" style="left:436px;top:29px;width:47px;height:24px;background:#9ad75c;border-radius:12px 0 0 12px"></div>
<div class="t" style="left:441px;top:33px;font-size:16px;color:#45691f;transform:scaleX(.85);transform-origin:0 0">SONG</div>
<svg class="a" style="left:496px;top:22px" width="22" height="20"><rect x="4" y="3" width="5" height="12" fill="#9be05c"/><rect x="12" y="3" width="5" height="12" fill="#9be05c"/></svg>
<div class="a" style="left:548px;top:25px;width:12px;height:12px;background:#cfdde4"></div>
<div class="a" style="left:588px;top:12px;width:36px;height:37px;border-radius:50%;background:#2a2e31"></div>
<div class="a" style="left:598px;top:22px;width:16px;height:16px;border-radius:50%;background:#e4484f"></div>
<div class="a" style="left:632px;top:13px;width:81px;height:35px;background:#4a4f52;border-radius:6px"></div>
<div class="t" style="left:637px;top:16px;font-size:30px;color:#d3d7d9;transform:scaleX(.66);transform-origin:0 0">120</div>
<div class="t" style="left:669px;top:25px;font-size:19px;color:#c4c8ca;transform:scaleX(.75);transform-origin:0 0">.000</div>
<svg class="a" style="left:702px;top:18px" width="10" height="26"><path d="M2,8 l3,-4 l3,4 M2,17 l3,4 l3,-4" stroke="#777c7f" stroke-width="1.5" fill="none"/></svg>
<div class="a" style="left:448px;top:90px;width:40px;height:6px;background:#8fd054;border-radius:2px"></div>
<div class="a" style="left:500px;top:92px;width:205px;height:3px;background:#2d3134"></div>
<div class="a" style="left:485px;top:82px;width:21px;height:22px;border-radius:50%;background:#2a2e31;box-shadow:0 1px 2px #222"></div>
<div class="a" style="left:494px;top:85px;width:2px;height:16px;background:#8fcf55"></div>
<div class="a" style="left:727px;top:7px;width:43px;height:47px;background:#2e3235;border-radius:5px;box-shadow:0 1px 1px #2a2d30, inset 0 0 0 1px #303437"></div>
<svg class="a" style="left:727px;top:7px" width="43" height="47" viewBox="0 0 43 47"><path d="M6,30 Q14,14 21,13 Q29,14 37,30" stroke="#d2d6d8" stroke-width="2.5" fill="none"/><path d="M19,10 h5 l1,5 l-2,19 h-3 l-2,-19 z" fill="#d2d6d8"/><rect x="20" y="13" width="3" height="4" fill="#2e3235"/></svg>
<div class="a" style="left:776px;top:7px;width:43px;height:47px;background:#2e3235;border-radius:5px;box-shadow:0 1px 1px #2a2d30, inset 0 0 0 1px #303437"></div>
<svg class="a" style="left:776px;top:7px" width="43" height="47" viewBox="0 0 43 47"><rect x="4" y="16" width="20" height="15" fill="#d2d6d8"/><rect x="8" y="16" width="3" height="9" fill="#2e3235"/><rect x="15" y="16" width="3" height="9" fill="#2e3235"/><circle cx="31" cy="23" r="9" fill="#2e3235" stroke="#d2d6d8" stroke-width="2.5"/><path d="M31,18 v5 h3" stroke="#d2d6d8" stroke-width="1.5" fill="none"/></svg>
<div class="a" style="left:825px;top:7px;width:43px;height:47px;background:#2e3235;border-radius:5px;box-shadow:0 1px 1px #2a2d30, inset 0 0 0 1px #303437"></div>
<svg class="a" style="left:825px;top:7px" width="43" height="47" viewBox="0 0 43 47"><text x="6" y="32" font-family="Liberation Sans" font-weight="bold" font-size="21" fill="#d2d6d8" transform="scale(1,1)">3.2.</text><text x="33" y="32" font-family="Liberation Sans" font-size="10" fill="#d2d6d8">t</text></svg>
<div class="a" style="left:874px;top:7px;width:43px;height:47px;background:#2e3235;border-radius:5px;box-shadow:0 1px 1px #2a2d30, inset 0 0 0 1px #303437"></div>
<svg class="a" style="left:874px;top:7px" width="43" height="47" viewBox="0 0 43 47"><rect x="5" y="15" width="20" height="16" fill="#e0e3e5"/><rect x="9" y="15" width="3" height="9" fill="#2e3235"/><rect x="16" y="15" width="3" height="9" fill="#2e3235"/><path d="M27,23 h10 M32,18 v10" stroke="#e0e3e5" stroke-width="3"/></svg>
<div class="a" style="left:923px;top:7px;width:43px;height:47px;background:#2e3235;border-radius:5px;box-shadow:0 1px 1px #2a2d30, inset 0 0 0 1px #303437"></div>
<svg class="a" style="left:923px;top:7px" width="43" height="47" viewBox="0 0 43 47"><rect x="5" y="16" width="16" height="14" fill="#d2d6d8"/><rect x="9" y="16" width="2.5" height="8" fill="#2e3235"/><rect x="14" y="16" width="2.5" height="8" fill="#2e3235"/><path d="M27,18 A7,7 0 0 1 37,20 M37,28 A7,7 0 0 1 27,27" stroke="#d2d6d8" stroke-width="3" fill="none"/><path d="M36,15 l2,6 l-6,-1 z M28,31 l-2,-6 l6,1 z" fill="#d2d6d8"/></svg>
<div class="a" style="left:969px;top:0;width:2px;height:58px;background:#2f3336"></div>
<div class="a" style="left:727px;top:68px;width:43px;height:47px;background:#2e3235;border-radius:5px;box-shadow:0 1px 1px #2a2d30, inset 0 0 0 1px #303437"></div>
<svg class="a" style="left:727px;top:68px" width="43" height="47" viewBox="0 0 43 47"><rect x="3" y="16" width="34" height="15" fill="#d2d6d8"/><path d="M5,20 h13 M5,24 h13 M5,28 h13 M8,17 v13 M12,17 v13 M16,17 v13" stroke="#2e3235" stroke-width="1"/><rect x="24" y="16" width="2" height="8" fill="#2e3235"/><rect x="30" y="16" width="2" height="8" fill="#2e3235"/></svg>
<div class="a" style="left:776px;top:68px;width:43px;height:47px;background:#2e3235;border-radius:5px;box-shadow:0 1px 1px #2a2d30, inset 0 0 0 1px #303437"></div>
<svg class="a" style="left:776px;top:68px" width="43" height="47" viewBox="0 0 43 47"><path d="M9,20 h12 v-6 l11,9 l-11,9 v-6 h-12 z" fill="#d8dcde"/></svg>
<div class="a" style="left:825px;top:68px;width:43px;height:47px;background:#2e3235;border-radius:5px;box-shadow:0 1px 1px #2a2d30, inset 0 0 0 1px #303437"></div>
<svg class="a" style="left:825px;top:68px" width="43" height="47" viewBox="0 0 43 47"><path d="M12,33 q4,-1 6,-6 l6,-9" stroke="#d2d6d8" stroke-width="3" fill="none"/><circle cx="12" cy="33" r="3" fill="#d2d6d8"/><circle cx="29" cy="15" r="1.5" fill="#d2d6d8"/><circle cx="28" cy="19" r="1.2" fill="#d2d6d8"/></svg>
<div class="a" style="left:874px;top:68px;width:43px;height:47px;background:#2e3235;border-radius:5px;box-shadow:0 1px 1px #2a2d30, inset 0 0 0 1px #303437"></div>
<svg class="a" style="left:874px;top:68px" width="43" height="47" viewBox="0 0 43 47"><path d="M14,29 l7,-7 M19,32 a5,5 0 0 1 -7,-7 l4,-4 a5,5 0 0 1 7,7 M24,15 a5,5 0 0 1 7,7 l-4,4 a5,5 0 0 1 -7,-7" stroke="#d2d6d8" stroke-width="2.5" fill="none"/></svg>
<div class="a" style="left:923px;top:68px;width:43px;height:47px;background:#2e3235;border-radius:5px;box-shadow:0 1px 1px #2a2d30, inset 0 0 0 1px #303437"></div>
<svg class="a" style="left:923px;top:68px" width="43" height="47" viewBox="0 0 43 47"><ellipse cx="21" cy="34" rx="13" ry="5" fill="#c9cdd0"/><ellipse cx="21" cy="32" rx="9" ry="3" fill="#2e3235"/><path d="M16,12 h10 l2,20 h-14 z" fill="#d2d6d8"/><ellipse cx="21" cy="12" rx="5" ry="2" fill="#9ea3a6"/></svg>
<div class="a" style="left:973px;top:4px;width:193px;height:51px;background:#303437;border-radius:3px"></div>
<div class="t" style="left:1024px;top:3px;font-size:53px;color:#cfd4d7;letter-spacing:8px;transform:scaleX(.61);transform-origin:0 0">0:30</div>
<div class="t" style="left:1102px;top:16px;font-size:38px;color:#cfd4d7;letter-spacing:3px;transform:scaleX(.7);transform-origin:0 0">:61</div>
<div class="t" style="left:1124px;top:9px;font-size:10px;font-weight:bold;color:#9ba0a3;transform:scaleX(.9);transform-origin:0 0">M:S:CS</div>
<div class="a" style="left:1175px;top:6px;width:180px;height:34px;background:#2b2f32"></div>
<div class="a" style="left:1175px;top:38px;width:63px;height:17px;background:#2b2f32"></div>
<div class="a" style="left:1177px;top:29px;width:61px;height:3px;background:#bdc2c5"></div>
<div class="a" style="left:1242px;top:7px;width:6px;height:15px;background:#c7cbce"></div>
<div class="a" style="left:1242px;top:24px;width:6px;height:14px;background:#c7cbce"></div>
<svg class="a" style="left:1333px;top:42px" width="20" height="16"><ellipse cx="10" cy="8" rx="8" ry="5" fill="none" stroke="#8d9295" stroke-width="2.5"/><circle cx="10" cy="7" r="2" fill="#8d9295"/></svg>
<div class="a" style="left:1367px;top:7px;width:222px;height:48px;background:#2a2e31"></div>
<div class="a" style="left:1368px;top:9px;width:50px;height:19px;background:#d3d7d9"></div>
<svg class="a" style="left:1366px;top:36px" width="130" height="20"><path d="M2,9 L12,9 L18,8 L24,7 L30,9 L34,8 L37,15 L38,9 L50,9 L60,10 L75,9 L90,10 L105,9 L125,8" stroke="#c3c8cb" stroke-width="1.5" fill="none"/></svg>
<div class="a" style="left:1497px;top:31px;width:12px;height:11px;border-radius:3px;background:#6c7174"></div>
<div class="t" style="left:1474px;top:10px;font-size:18px;font-weight:bold;color:#c8cdd0;transform:scaleX(.92);transform-origin:0 0">39</div>
<div class="t" style="left:1534px;top:10px;font-size:18px;font-weight:bold;color:#c8cdd0;transform:scaleX(.86);transform-origin:0 0">641 MB</div>
<div class="t" style="left:1549px;top:34px;font-size:22px;color:#c8cdd0;transform:scaleX(.75);transform-origin:0 0">0</div>
<svg class="a" style="left:1563px;top:38px" width="26" height="16"><path d="M2,8 Q7,2 13,5 Q19,2 24,8 Q18,14 13,13 Q8,14 2,8 Z" fill="none" stroke="#b4b9bc" stroke-width="2"/></svg>
<div class="a" style="left:1600px;top:7px;width:43px;height:47px;background:#2e3235;border-radius:5px;box-shadow:0 1px 1px #2a2d30, inset 0 0 0 1px #303437"></div>
<svg class="a" style="left:1600px;top:7px" width="43" height="47" viewBox="0 0 43 47"><path d="M14,17 A10,10 0 1 0 21,14" stroke="#d8dcde" stroke-width="3" fill="none"/><path d="M21,8 l0,12 l-8,-6 z" fill="#d8dcde"/></svg>
<div class="a" style="left:1649px;top:7px;width:43px;height:47px;background:#2e3235;border-radius:5px;box-shadow:0 1px 1px #2a2d30, inset 0 0 0 1px #303437"></div>
<svg class="a" style="left:1649px;top:7px" width="43" height="47" viewBox="0 0 43 47"><path d="M14,10 L29,30 M29,10 L14,30" stroke="#d2d6d8" stroke-width="2.5"/><circle cx="13" cy="10" r="3" fill="none" stroke="#d2d6d8" stroke-width="1.5"/><circle cx="30" cy="10" r="3" fill="none" stroke="#d2d6d8" stroke-width="1.5"/><path d="M21,28 v12 M14,35 h14" stroke="#d2d6d8" stroke-width="2.5"/></svg>
<div class="a" style="left:1698px;top:7px;width:43px;height:47px;background:#2e3235;border-radius:5px;box-shadow:0 1px 1px #2a2d30, inset 0 0 0 1px #303437"></div>
<svg class="a" style="left:1698px;top:7px" width="43" height="47" viewBox="0 0 43 47"><rect x="16" y="7" width="11" height="22" rx="5.5" fill="#d8dcde"/><path d="M13,22 q0,10 8.5,10 q8.5,0 8.5,-10" stroke="#d8dcde" stroke-width="2" fill="none"/><path d="M21.5,32 v6 M15,39 h13" stroke="#d8dcde" stroke-width="2.5"/></svg>
<div class="a" style="left:1747px;top:7px;width:43px;height:47px;background:#2e3235;border-radius:5px;box-shadow:0 1px 1px #2a2d30, inset 0 0 0 1px #303437"></div>
<svg class="a" style="left:1747px;top:7px" width="43" height="47" viewBox="0 0 43 47"><text x="12" y="35" font-family="Liberation Sans" font-weight="bold" font-size="30" fill="#dfe2e4">?</text></svg>
<div class="a" style="left:1834px;top:18px;width:26px;height:26px;background:#2e3235;border-radius:3px"></div>
<div class="a" style="left:1863px;top:18px;width:26px;height:26px;background:#2e3235;border-radius:3px"></div>
<div class="a" style="left:1893px;top:18px;width:26px;height:26px;background:#2e3235;border-radius:3px"></div>
<div class="a" style="left:1841px;top:33px;width:11px;height:4px;background:#cfd3d5"></div>
<svg class="a" style="left:1863px;top:18px" width="26" height="26"><rect x="10" y="6" width="10" height="8" fill="none" stroke="#cfd3d5" stroke-width="2"/><rect x="6" y="11" width="10" height="8" fill="#2e3235" stroke="#cfd3d5" stroke-width="2.5"/></svg>
<svg class="a" style="left:1893px;top:18px" width="27" height="26"><path d="M7,7 L19,19 M19,7 L7,19" stroke="#cfd3d5" stroke-width="2.5"/></svg>
<svg class="a" style="left:976px;top:80px" width="24" height="26"><path d="M3,22 V12 A9,9 0 0 1 21,12 V22 h-6 V13 a3,3 0 0 0 -6,0 V22 z" fill="#a6abae"/></svg>
<div class="a" style="left:1005px;top:77px;width:89px;height:30px;background:#2a2e31;border-radius:3px"></div>
<div class="t" style="left:1008px;top:82px;font-size:18px;font-weight:bold;color:#e2e5e7;transform:scaleX(.8);transform-origin:0 0">Line</div>
<svg class="a" style="left:1078px;top:84px" width="12" height="16"><path d="M3,3 l6,5 l-6,5 z" fill="#777c7f"/></svg>
<div class="a" style="left:1111px;top:73px;width:25px;height:37px;background:#2b2f32;border-radius:3px 0 0 3px"></div>
<svg class="a" style="left:1115px;top:84px" width="16" height="16"><path d="M4,2 l8,6 l-8,6 z" fill="#dfe3e5"/></svg>
<div class="a" style="left:1136px;top:73px;width:141px;height:37px;background:linear-gradient(#62676a,#575c5f)"></div>
<div class="t" style="left:1181px;top:75px;font-size:29px;color:#d5d9db;transform:scaleX(.7);transform-origin:0 0">Pattern 1</div>
<svg class="a" style="left:1262px;top:80px" width="10" height="24"><path d="M2,7 l3,-3 l3,3 M2,17 l3,3 l3,-3" stroke="#8a8f92" stroke-width="1.3" fill="none"/></svg>
<div class="a" style="left:1277px;top:73px;width:25px;height:37px;background:#2b2f32;border-radius:0 3px 3px 0"></div>
<svg class="a" style="left:1280px;top:82px" width="20" height="20"><path d="M10,4 v12 M4,10 h12" stroke="#e1e4e6" stroke-width="2.5"/></svg>
<div class="a" style="left:1315.0px;top:68px;width:43px;height:47px;background:#2e3235;border-radius:5px;box-shadow:0 1px 1px #2a2d30, inset 0 0 0 1px #303437"></div>
<svg class="a" style="left:1315.0px;top:68px" width="43" height="47" viewBox="0 0 43 47"><path d="M16,9 h11 l-5.5,6 z" fill="#dfe2e4"/><rect x="8" y="19" width="27" height="19" fill="none" stroke="#dfe2e4" stroke-width="2.5"/><path d="M11,31 h6 M17,29 h5 M23,27 h6 M10,35 h23" stroke="#dfe2e4" stroke-width="2"/></svg>
<div class="a" style="left:1364.2px;top:68px;width:43px;height:47px;background:#2e3235;border-radius:5px;box-shadow:0 1px 1px #2a2d30, inset 0 0 0 1px #303437"></div>
<svg class="a" style="left:1364.2px;top:68px" width="43" height="47" viewBox="0 0 43 47"><rect x="6" y="10" width="11" height="28" fill="#dfe2e4"/><rect x="6" y="16" width="5" height="3" fill="#2e3235"/><rect x="6" y="28" width="5" height="3" fill="#2e3235"/><rect x="20" y="27" width="6" height="5" fill="#dfe2e4"/><rect x="26" y="21" width="6" height="5" fill="#dfe2e4"/><rect x="31" y="15" width="6" height="5" fill="#dfe2e4"/></svg>
<div class="a" style="left:1413.4px;top:68px;width:43px;height:47px;background:#2e3235;border-radius:5px;box-shadow:0 1px 1px #2a2d30, inset 0 0 0 1px #303437"></div>
<svg class="a" style="left:1413.4px;top:68px" width="43" height="47" viewBox="0 0 43 47"><rect x="9" y="12" width="18" height="6" rx="1" fill="none" stroke="#d2d6d8" stroke-width="2"/><rect x="9" y="22" width="18" height="6" rx="1" fill="none" stroke="#d2d6d8" stroke-width="2"/><rect x="9" y="32" width="18" height="6" rx="1" fill="none" stroke="#d2d6d8" stroke-width="2"/><rect x="30" y="12" width="4" height="6" fill="#9aa09f"/><rect x="30" y="22" width="4" height="6" fill="#9aa09f"/><rect x="30" y="32" width="4" height="6" fill="#9aa09f"/></svg>
<div class="a" style="left:1462.6px;top:68px;width:43px;height:47px;background:#2e3235;border-radius:5px;box-shadow:0 1px 1px #2a2d30, inset 0 0 0 1px #303437"></div>
<svg class="a" style="left:1462.6px;top:68px" width="43" height="47" viewBox="0 0 43 47"><path d="M15,7 v33 M27,7 v33" stroke="#d2d6d8" stroke-width="2.5"/><rect x="10" y="21" width="10" height="8" fill="#2e3235" stroke="#d2d6d8" stroke-width="2"/><rect x="22" y="21" width="10" height="8" fill="#2e3235" stroke="#d2d6d8" stroke-width="2"/></svg>
<div class="a" style="left:1511.8px;top:68px;width:43px;height:47px;background:#2e3235;border-radius:5px;box-shadow:0 1px 1px #2a2d30, inset 0 0 0 1px #303437"></div>
<svg class="a" style="left:1511.8px;top:68px" width="43" height="47" viewBox="0 0 43 47"><path d="M8,6 h5 l2,2 h5 v6 h-12 z" fill="none" stroke="#d2d6d8" stroke-width="2"/><path d="M13,15 v20 h8 M13,25 h8" stroke="#d2d6d8" stroke-width="2" fill="none"/><path d="M20,21 l8,4 l-8,4 z M20,31 l8,4 l-8,4 z" fill="#d2d6d8"/><path d="M26,25 h6 M26,35 h6" stroke="#d2d6d8" stroke-width="2"/></svg>
<div class="a" style="left:1561.0px;top:68px;width:43px;height:47px;background:#2e3235;border-radius:5px;box-shadow:0 1px 1px #2a2d30, inset 0 0 0 1px #303437"></div>
<svg class="a" style="left:1561.0px;top:68px" width="43" height="47" viewBox="0 0 43 47"><path d="M10,11 h11 l6,6 v21 h-17 z" fill="#d2d6d8"/><path d="M14,8 h10 l5,5" stroke="#9ca1a4" stroke-width="1.5" fill="none"/></svg>
<div class="a" style="left:1610.2px;top:68px;width:43px;height:47px;background:#2e3235;border-radius:5px;box-shadow:0 1px 1px #2a2d30, inset 0 0 0 1px #303437"></div>
<svg class="a" style="left:1610.2px;top:68px" width="43" height="47" viewBox="0 0 43 47"><path d="M15,7 v6 M27,7 v6" stroke="#d8dcde" stroke-width="3"/><path d="M11,13 h20 l-3,12 l-4,4 v10 h-5 v-10 l-4,-4 z" fill="#d8dcde"/></svg>
<div class="a" style="left:1659.4px;top:68px;width:43px;height:47px;background:#2e3235;border-radius:5px;box-shadow:0 1px 1px #2a2d30, inset 0 0 0 1px #303437"></div>
<svg class="a" style="left:1659.4px;top:68px" width="43" height="47" viewBox="0 0 43 47"><path d="M25,9 l7,6 l-5,5 l-7,-6 z" fill="#d8dcde"/><path d="M22,16 l-8,14 v6" stroke="#d8dcde" stroke-width="3" fill="none"/><path d="M10,38 h24 l-14,-8 z" fill="#d8dcde"/></svg>
<div class="a" style="left:1708.6px;top:68px;width:43px;height:47px;background:#2e3235;border-radius:5px;box-shadow:0 1px 1px #2a2d30, inset 0 0 0 1px #303437"></div>
<svg class="a" style="left:1708.6px;top:68px" width="43" height="47" viewBox="0 0 43 47"><path d="M10,15 l13,8 l6,-4 l6,7 l-4,7 l-12,-2 z" fill="#d8dcde"/><path d="M22,33 l11,-1" stroke="#a5aaad" stroke-width="2"/></svg>
<div class="a" style="left:1757.8px;top:68px;width:43px;height:47px;background:#2e3235;border-radius:5px;box-shadow:0 1px 1px #2a2d30, inset 0 0 0 1px #303437"></div>
<svg class="a" style="left:1757.8px;top:68px" width="43" height="47" viewBox="0 0 43 47"><path d="M10,16 h4 l3,14 h14 l3,-10 h-18" stroke="#c5c9cc" stroke-width="2.5" fill="none"/><path d="M18,21 h14 M18,25 h13" stroke="#c5c9cc" stroke-width="1.5"/><circle cx="19" cy="34" r="2" fill="#c5c9cc"/><circle cx="29" cy="34" r="2" fill="#c5c9cc"/></svg>
<div class="a" style="left:1806px;top:65px;width:114px;height:51px;background:#303437"></div>
<div class="t" style="left:1814px;top:71px;font-size:17px;color:#8f9497;transform:scaleX(.9);transform-origin:0 0">02/10 <b style="color:#dfe3e5">FL</b></div>
<div class="t" style="left:1814px;top:93px;font-size:17px;font-weight:bold;color:#d3d7d9;transform:scaleX(.88);transform-origin:0 0">STUDIO | Ch..</div>
<svg class="a" style="left:9px;top:128px" width="24" height="24"><path d="M4,8 l6,-5 l13,13 l-6,6 z" fill="#e2b35a" stroke="#8a6a2c" stroke-width="1"/><path d="M6,9 l11,11 M9,6 l11,11" stroke="#8a6a2c" stroke-width="1.2"/></svg>
<svg class="a" style="left:39px;top:128px" width="24" height="24"><path d="M3,4 l8,0 l3,6 l-4,4 l-7,-1 z" fill="#d2d6d8"/><path d="M12,13 l6,6" stroke="#d2d6d8" stroke-width="3"/><circle cx="19" cy="20" r="3" fill="#d2d6d8"/><path d="M3,4 v16" stroke="#d2d6d8" stroke-width="2"/></svg>
<svg class="a" style="left:71px;top:128px" width="24" height="24"><circle cx="12" cy="12" r="8.5" fill="none" stroke="#d2d6d8" stroke-width="2.5"/><path d="M7,17 L17,7" stroke="#d2d6d8" stroke-width="2.5"/></svg>
<svg class="a" style="left:102px;top:128px" width="24" height="24"><path d="M3,9 h4 l7,-6 v18 l-7,-6 h-4 z" fill="#d2d6d8"/><path d="M16,9 l6,6 M22,9 l-6,6" stroke="#d2d6d8" stroke-width="2"/></svg>
<svg class="a" style="left:133px;top:128px" width="24" height="24"><path d="M1,12 l6,-6 v4 h10 v-4 l6,6 l-6,6 v-4 h-10 v4 z" fill="#d2d6d8"/><rect x="10" y="8" width="4" height="9" fill="#33373a"/></svg>
<svg class="a" style="left:166px;top:128px" width="24" height="24"><path d="M2,3 h11 l8,5 v14 l-6,-2 z" fill="#d2d6d8"/><path d="M2,3 l11,10" stroke="#33373a" stroke-width="1.5"/><rect x="15" y="10" width="2" height="4" fill="#33373a"/></svg>
<svg class="a" style="left:196px;top:128px" width="24" height="24"><path d="M4,9 v-5 h5 M15,4 h5 v5 M20,15 v5 h-5 M9,20 h-5 v-5" stroke="#d2d6d8" stroke-width="2.5" fill="none"/></svg>
<svg class="a" style="left:228px;top:128px" width="24" height="24"><circle cx="10" cy="10" r="7.5" fill="none" stroke="#d2d6d8" stroke-width="2.5"/><path d="M7,13 l6,-6" stroke="#d2d6d8" stroke-width="2"/><path d="M15,15 l6,6" stroke="#d2d6d8" stroke-width="3"/></svg>
<svg class="a" style="left:260px;top:128px" width="24" height="24"><path d="M2,9 h4 l7,-6 v18 l-7,-6 h-4 z" fill="#d2d6d8"/><rect x="15" y="7" width="3" height="10" fill="#d2d6d8"/><rect x="20" y="7" width="3" height="10" fill="#d2d6d8"/></svg>
<svg class="a" style="left:308px;top:128px" width="26" height="26"><path d="M3,9 h4 l6,-6 v18 l-6,-6 h-4 z" fill="none" stroke="#8ed24f" stroke-width="2.5"/><path d="M15,5 l9,7 l-9,7 z" fill="#8ed24f"/></svg>
<div class="t" style="left:340px;top:127px;font-size:21px;font-weight:bold;color:#c6cbce;transform:scaleX(.935);transform-origin:0 0">Playlist - Arrangement</div>
<svg class="a" style="left:551px;top:133px" width="10" height="14"><path d="M2,2 l6,5 l-6,5 z" fill="#6c7174"/></svg>
<div class="t" style="left:569px;top:127px;font-size:21px;font-weight:bold;color:#d6a95a;transform:scaleX(.93);transform-origin:0 0">Pattern 1</div>
<svg class="a" style="left:656px;top:134px" width="40" height="36"><path d="M6,6 L10,4 L20,14 L21,10 Q24,9 25,12 Q28,11 29,14 Q32,13 33,17 L33,24 Q31,30 26,31 L20,31 Q16,28 13,22 L9,16 Q8,13 11,13 L15,17 Z" fill="#eceeef" stroke="#8d9295" stroke-width="1"/><path d="M3,9 l5,-4" stroke="#d6a95a" stroke-width="2"/></svg>
<div class="a" style="left:1877px;top:136px;width:12px;height:3px;background:#d2d6d8"></div>
<svg class="a" style="left:1902px;top:132px" width="18" height="18"><rect x="6" y="2" width="10" height="8" fill="none" stroke="#cfd3d5" stroke-width="2"/><rect x="2" y="6" width="10" height="9" fill="#33373a" stroke="#cfd3d5" stroke-width="2.5"/></svg>
<svg class="a" style="left:160px;top:158px" width="170" height="62"><path d="M8,2 H167 V60 H0 V20 Q0,4 8,2 Z" fill="#383c3f"/><rect x="45" y="4" width="1.5" height="54" fill="#2f3336"/></svg>
<svg class="a" style="left:217px;top:162px" width="24" height="24"><path d="M1,12 h4 l2,-4 l2,4 M15,12 h4 M7,12 l3,-9 l4,18 l3,-9" stroke="#e3e6e8" stroke-width="0" fill="none"/><path d="M1,12 q3,-3 5,0 q3,-10 6,-11 q3,1 6,11 q2,-3 5,0 q-3,3 -5,0 q-3,10 -6,11 q-3,-1 -6,-11 q-2,3 -5,0z" fill="#e3e6e8"/></svg>
<svg class="a" style="left:257px;top:162px" width="24" height="24"><circle cx="5" cy="19" r="3" fill="none" stroke="#6a6f72" stroke-width="1.5"/><circle cx="19" cy="5" r="3" fill="none" stroke="#6a6f72" stroke-width="1.5"/><path d="M7,17 L17,7" stroke="#6a6f72" stroke-width="1.5"/></svg>
<svg class="a" style="left:294px;top:162px" width="24" height="24"><rect x="2" y="4" width="20" height="15" fill="#6e7376"/><rect x="7" y="4" width="2.5" height="9" fill="#383c3f"/><rect x="14" y="4" width="2.5" height="9" fill="#383c3f"/></svg>
<svg class="a" style="left:174px;top:190px" width="24" height="24"><path d="M12,4 v16 M4,12 h16" stroke="#e6e9eb" stroke-width="3"/></svg>
<svg class="a" style="left:217px;top:191px" width="24" height="24"><path d="M5,4 L19,20 M19,4 L5,20" stroke="#e1e4e6" stroke-width="3"/></svg>
<svg class="a" style="left:256px;top:191px" width="24" height="24"><path d="M6,20 q2,-12 12,-16" stroke="#55595c" stroke-width="1.5" fill="none"/></svg>
<svg class="a" style="left:294px;top:191px" width="24" height="24"><path d="M2,12 l5,-4 v8 z M22,12 l-5,-4 v8 z M7,12 h10" stroke="#5a5f62" stroke-width="1.5" fill="#5a5f62"/></svg>
<svg class="a" style="left:14px;top:186px" width="26" height="24"><path d="M1,12 q3,-3 5,0 q3,-10 7,-11 q3,1 6,11 q2,-3 5,0 q-3,3 -5,0 q-3,10 -6,11 q-4,-1 -7,-11 q-2,3 -5,0z" fill="#4b5053"/></svg>
<svg class="a" style="left:86px;top:186px" width="24" height="24"><circle cx="5" cy="19" r="3" fill="none" stroke="#4b5053" stroke-width="1.5"/><circle cx="19" cy="5" r="3" fill="none" stroke="#4b5053" stroke-width="1.5"/><path d="M7,17 L17,7" stroke="#4b5053" stroke-width="1.5"/></svg>
<div class="a" style="left:133px;top:220px;width:18px;height:20px;background:#33373a"></div>
<div class="a" style="left:141px;top:226px;width:2px;height:6px;background:#aab"></div>
<svg class="a" style="left:18px;top:1064px" width="16" height="16"><path d="M8,2 v12 M2,8 h12" stroke="#4d5255" stroke-width="2"/></svg>
<div class="a" style="left:328px;top:160px;width:28px;height:28px;background:#383c3f"></div>
<svg class="a" style="left:328px;top:160px" width="28" height="28"><path d="M17,8 l-6,6 l6,6" stroke="#55595c" stroke-width="1.5" fill="none"/></svg>
<div class="a" style="left:1899px;top:160px;width:21px;height:28px;background:#383c3f"></div>
<svg class="a" style="left:1899px;top:160px" width="21" height="28"><path d="M8,8 l6,6 l-6,6" stroke="#55595c" stroke-width="1.5" fill="none"/></svg>
<div class="a" style="left:652px;top:163px;width:1008px;height:4px;background:#6f98ad"></div>
<div class="a" style="left:584px;top:161px;width:3px;height:27px;background:#8fcf55"></div>
<div class="a" style="left:600px;top:168px;width:19px;height:3px;background:#5fb8c9"></div>
<div class="a" style="left:630px;top:168px;width:12px;height:3px;background:#5fb8c9"></div>
<div class="a" style="left:657px;top:168px;width:8px;height:3px;background:#5fb8c9"></div>
<div class="a" style="left:677px;top:168px;width:12px;height:3px;background:#5fb8c9"></div>
<div class="a" style="left:717px;top:168px;width:8px;height:3px;background:#5fb8c9"></div>
<div class="a" style="left:609px;top:172.5px;width:20px;height:3px;background:#5fb8c9"></div>
<div class="a" style="left:641px;top:172.5px;width:15px;height:3px;background:#5fb8c9"></div>
<div class="a" style="left:665px;top:172.5px;width:12px;height:3px;background:#5fb8c9"></div>
<div class="a" style="left:690px;top:172.5px;width:12px;height:3px;background:#5fb8c9"></div>
<div class="a" style="left:732px;top:172.5px;width:9px;height:3px;background:#5fb8c9"></div>
<div class="a" style="left:587px;top:177px;width:17px;height:3px;background:#5fb8c9"></div>
<div class="a" style="left:630px;top:177px;width:5px;height:3px;background:#5fb8c9"></div>
<div class="a" style="left:650px;top:177px;width:10px;height:3px;background:#5fb8c9"></div>
<div class="a" style="left:700px;top:177px;width:17px;height:3px;background:#5fb8c9"></div>
<div class="a" style="left:640px;top:181.5px;width:9px;height:3px;background:#5fb8c9"></div>
<svg class="a" style="left:1828px;top:968px" width="76" height="86" viewBox="0 0 76 86"><path d="M52,20 L70,6 L73,9 L58,26 Z" fill="#e8ecee" stroke="#1a1c24" stroke-width="1.5"/><path d="M56,26 L68,58 L63,60 L51,30 Z" fill="#2a2d3a" stroke="#d8dde0" stroke-width="1"/><circle cx="60" cy="35" r="5" fill="#e8ecee" stroke="#1a1c24" stroke-width="1.5"/><path d="M22,12 q6,-8 12,-4 q4,-6 10,-2 q5,-4 9,2 q4,2 2,10 L24,22 Z" fill="#f2a531" stroke="#3a2a10" stroke-width="1"/><path d="M26,10 l4,10 M34,7 l3,12 M42,6 l2,13 M49,9 l0,11" stroke="#ffd85a" stroke-width="2"/><path d="M18,22 L52,20 L54,52 L20,54 Z" fill="#f5cf26" stroke="#20202a" stroke-width="1.5"/><path d="M18,22 L28,24 L26,54 L20,54 Z" fill="#e8791c"/><path d="M24,32 h28 l-2,8 h-10 l-2,-4 l-2,4 h-10 z" fill="#1c1f2c" stroke="#c8ccd2" stroke-width="1"/><path d="M30,45 q10,6 18,0" stroke="#1c1f2c" stroke-width="2.5" fill="#fff"/><circle cx="14" cy="34" r="10" fill="#1c1f2c" stroke="#d5d9de" stroke-width="1.5"/><circle cx="14" cy="34" r="6" fill="#1c1f2c" stroke="#f2c21e" stroke-width="2"/><path d="M26,55 h24 l2,12 h-28 z" fill="#1f2333" stroke="#c5c9d0" stroke-width="0.8"/><path d="M36,55 l4,0 l1,12 l-3,2 l-3,-2 z" fill="#f2c21e"/><circle cx="9" cy="56" r="5" fill="#e8ecee" stroke="#1a1c24" stroke-width="1"/><path d="M8,70 h16 l2,9 h-20 z" fill="#f0a030" stroke="#1a1c24" stroke-width="1.2"/><path d="M5,77 h22 v4 h-22 z" fill="#eef0f2"/><path d="M42,68 h16 l5,9 h-22 z" fill="#f0a030" stroke="#1a1c24" stroke-width="1.2"/><path d="M40,76 h24 v4 h-24 z" fill="#eef0f2"/></svg>
</body></html>
